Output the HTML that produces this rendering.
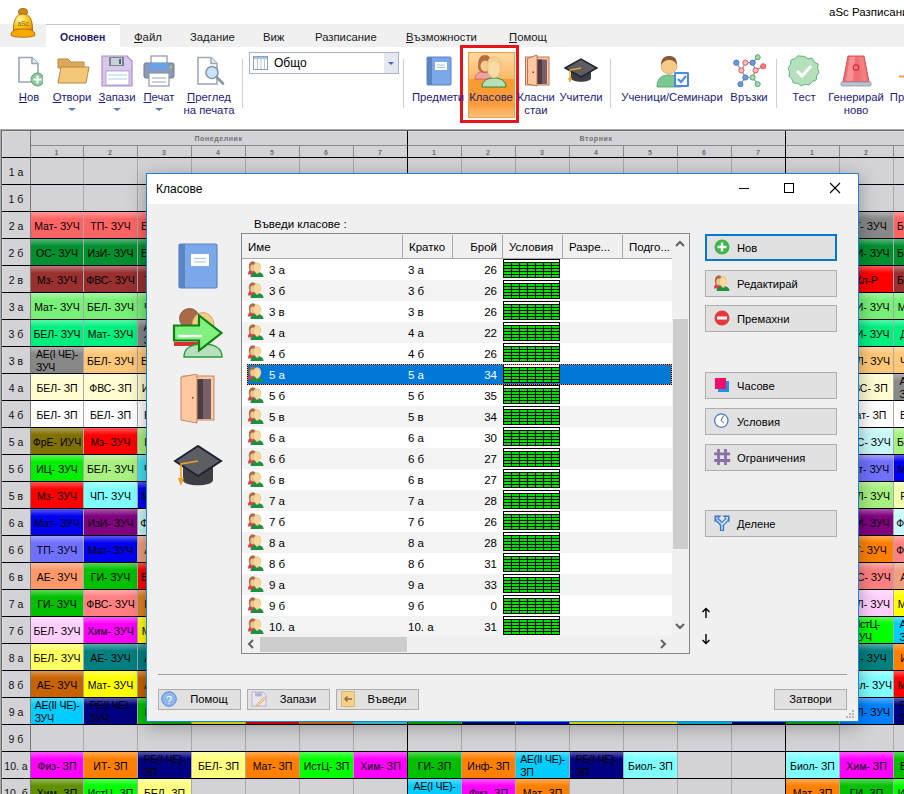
<!DOCTYPE html><html><head><meta charset="utf-8"><style>
*{box-sizing:border-box}
html,body{margin:0;padding:0}
body{width:904px;height:794px;overflow:hidden;position:relative;background:#fff;font-family:"Liberation Sans",sans-serif;}
.a{position:absolute}
.t{position:absolute;white-space:nowrap;}
.cell{position:absolute;overflow:hidden;font-size:10.5px;color:#000;line-height:11px;display:flex;align-items:center;justify-content:center;text-align:center;padding-top:2px}
.c2{align-items:flex-start;text-align:left;padding-top:1px;line-height:13px;letter-spacing:-0.25px}
.rl{position:absolute;font-size:10.5px;color:#101010;display:flex;align-items:center;justify-content:center;padding-top:2px}
.hn{position:absolute;font-size:7px;font-weight:bold;color:#707070;text-align:center;line-height:8px}
.dn{letter-spacing:0.6px}
.rt{position:absolute;font-size:11.3px;color:#1e1a78;white-space:nowrap;text-align:center;line-height:13px}
.tab{position:absolute;top:31px;font-size:11.3px;color:#1a1a1a;white-space:nowrap}
.btnx{position:absolute;background:#e1e1e1;border:1px solid #adadad;font-size:11.5px;color:#000}
.btn .l{position:absolute;white-space:nowrap}
.lr{position:absolute;left:0;width:429px;height:21px;font-size:11.5px;color:#000}
</style></head><body>

<div class="a" style="left:0;top:129px;width:904px;height:665px;background:#d3d2d7"></div>
<div class="a" style="left:0;top:129px;width:904px;height:1px;background:#ababab"></div>
<div class="a" style="left:1px;top:130px;width:903px;height:1px;background:#686868"></div>
<div class="a" style="left:0;top:129px;width:1px;height:665px;background:#ababab"></div>
<div class="a" style="left:1px;top:130px;width:1px;height:664px;background:#686868"></div>
<div class="a" style="left:2px;top:131px;width:902px;height:1px;background:#dedde2"></div>
<div class="a" style="left:2px;top:131px;width:1px;height:663px;background:#dedde2"></div>
<div class="a" style="left:30px;top:145px;width:874px;height:1px;background:#8a8a8a"></div>
<div class="hn dn" style="left:30px;top:135px;width:377px;">Понеделник</div>
<div class="hn dn" style="left:407px;top:135px;width:378px;">Вторник</div>
<div class="hn dn" style="left:785px;top:135px;width:378px;">Сряда</div>
<div class="cell" style="left:31px;top:212px;width:52px;height:26px;background:linear-gradient(#ff9a9a,#ff6464 7px,#ff6464)">Мат-&#8203; ЗУЧ</div>
<div class="cell" style="left:84px;top:212px;width:53px;height:26px;background:linear-gradient(#ff9a9a,#ff6464 7px,#ff6464)">ТП-&#8203; ЗУЧ</div>
<div class="cell" style="left:138px;top:212px;width:53px;height:26px;background:linear-gradient(#ff9a9a,#ff6464 7px,#ff6464)">БЕЛ-&#8203; ЗУЧ</div>
<div class="cell" style="left:31px;top:239px;width:52px;height:26px;background:linear-gradient(#59b678,#009030 7px,#009030)">ОС-&#8203; ЗУЧ</div>
<div class="cell" style="left:84px;top:239px;width:53px;height:26px;background:linear-gradient(#59b678,#009030 7px,#009030)">ИзИ-&#8203; ЗУЧ</div>
<div class="cell" style="left:138px;top:239px;width:53px;height:26px;background:linear-gradient(#59b678,#009030 7px,#009030)">БЕЛ-&#8203; ЗУЧ</div>
<div class="cell" style="left:31px;top:266px;width:52px;height:26px;background:linear-gradient(#bc7878,#983030 7px,#983030)">Мз-&#8203; ЗУЧ</div>
<div class="cell" style="left:84px;top:266px;width:53px;height:26px;background:linear-gradient(#bc7878,#983030 7px,#983030)">ФВС-&#8203; ЗУЧ</div>
<div class="cell" style="left:138px;top:266px;width:53px;height:26px;background:linear-gradient(#bc7878,#983030 7px,#983030)">ТП-&#8203; ЗУЧ</div>
<div class="cell" style="left:31px;top:293px;width:52px;height:26px;background:linear-gradient(#a7f5a7,#78f078 7px,#78f078)">Мат-&#8203; ЗУЧ</div>
<div class="cell" style="left:84px;top:293px;width:53px;height:26px;background:linear-gradient(#a7f5a7,#78f078 7px,#78f078)">БЕЛ-&#8203; ЗУЧ</div>
<div class="cell" style="left:138px;top:293px;width:53px;height:26px;background:linear-gradient(#a7f5a7,#78f078 7px,#78f078)">ЧП-&#8203; ЗУЧ</div>
<div class="cell" style="left:31px;top:320px;width:52px;height:26px;background:linear-gradient(#59f5ac,#00f080 7px,#00f080)">БЕЛ-&#8203; ЗУЧ</div>
<div class="cell" style="left:84px;top:320px;width:53px;height:26px;background:linear-gradient(#59f5ac,#00f080 7px,#00f080)">Мат-&#8203; ЗУЧ</div>
<div class="cell c2" style="left:138px;top:320px;width:53px;height:26px;background:linear-gradient(#b1b1b1,#888888 7px,#888888)"><span>АЕ(I ЧЕ)-<br>ЗУЧ</span></div>
<div class="cell c2" style="left:31px;top:347px;width:52px;height:26px;background:linear-gradient(#b1b1b1,#888888 7px,#888888)"><span>АЕ(I ЧЕ)-<br>ЗУЧ</span></div>
<div class="cell" style="left:84px;top:347px;width:53px;height:26px;background:linear-gradient(#ffdba7,#ffc878 7px,#ffc878)">БЕЛ-&#8203; ЗУЧ</div>
<div class="cell" style="left:138px;top:347px;width:53px;height:26px;background:linear-gradient(#ffdba7,#ffc878 7px,#ffc878)">БЕЛ-&#8203; ЗУЧ</div>
<div class="cell" style="left:31px;top:374px;width:52px;height:26px;background:linear-gradient(#fffde0,#fffcd0 7px,#fffcd0)">БЕЛ-&#8203; ЗП</div>
<div class="cell" style="left:84px;top:374px;width:53px;height:26px;background:linear-gradient(#fffde0,#fffcd0 7px,#fffcd0)">ФВС-&#8203; ЗП</div>
<div class="cell" style="left:138px;top:374px;width:53px;height:26px;background:linear-gradient(#fffde0,#fffcd0 7px,#fffcd0)">ИстЦ-&#8203; ЗП</div>
<div class="cell" style="left:31px;top:401px;width:52px;height:26px;background:linear-gradient(#ffffff,#ffffff 7px,#ffffff)">БЕЛ-&#8203; ЗП</div>
<div class="cell" style="left:84px;top:401px;width:53px;height:26px;background:linear-gradient(#ffffff,#ffffff 7px,#ffffff)">БЕЛ-&#8203; ЗП</div>
<div class="cell" style="left:138px;top:401px;width:53px;height:26px;background:linear-gradient(#ffffff,#ffffff 7px,#ffffff)">БЕЛ-&#8203; ЗП</div>
<div class="cell" style="left:31px;top:428px;width:52px;height:26px;background:linear-gradient(#aca259,#807000 7px,#807000)">ФрЕ-&#8203; ИУЧ</div>
<div class="cell" style="left:84px;top:428px;width:53px;height:26px;background:linear-gradient(#ff5959,#ff0000 7px,#ff0000)">Мз-&#8203; ЗУЧ</div>
<div class="cell" style="left:138px;top:428px;width:53px;height:26px;background:linear-gradient(#c6f5ac,#a8f080 7px,#a8f080)">ВЕ-&#8203; ЗУЧ</div>
<div class="cell" style="left:31px;top:455px;width:52px;height:26px;background:linear-gradient(#59f559,#00f000 7px,#00f000)">ИЦ-&#8203; ЗУЧ</div>
<div class="cell" style="left:84px;top:455px;width:53px;height:26px;background:linear-gradient(#c6f5ac,#a8f080 7px,#a8f080)">БЕЛ-&#8203; ЗУЧ</div>
<div class="cell" style="left:138px;top:455px;width:53px;height:26px;background:linear-gradient(#82eaf5,#40e0f0 7px,#40e0f0)">ЧП-&#8203; ЗУЧ</div>
<div class="cell" style="left:31px;top:482px;width:52px;height:26px;background:linear-gradient(#ff5959,#ff0000 7px,#ff0000)">Мз-&#8203; ЗУЧ</div>
<div class="cell" style="left:84px;top:482px;width:53px;height:26px;background:linear-gradient(#acffff,#80ffff 7px,#80ffff)">ЧП-&#8203; ЗУЧ</div>
<div class="cell" style="left:138px;top:482px;width:53px;height:26px;background:linear-gradient(#5959f5,#0000f0 7px,#0000f0)">Мат-&#8203; ЗУЧ</div>
<div class="cell" style="left:31px;top:509px;width:52px;height:26px;background:linear-gradient(#5959f5,#0000f0 7px,#0000f0)">Мат-&#8203; ЗУЧ</div>
<div class="cell" style="left:84px;top:509px;width:53px;height:26px;background:linear-gradient(#ac59ac,#800080 7px,#800080)">ИзИ-&#8203; ЗУЧ</div>
<div class="cell" style="left:138px;top:509px;width:53px;height:26px;background:linear-gradient(#dbfafa,#c8f8f8 7px,#c8f8f8)">ФВС-&#8203; ЗУЧ</div>
<div class="cell" style="left:31px;top:536px;width:52px;height:26px;background:linear-gradient(#a2a2ff,#7070ff 7px,#7070ff)">ТП-&#8203; ЗУЧ</div>
<div class="cell" style="left:84px;top:536px;width:53px;height:26px;background:linear-gradient(#5959f5,#0000f0 7px,#0000f0)">Мат-&#8203; ЗУЧ</div>
<div class="cell" style="left:138px;top:536px;width:53px;height:26px;background:linear-gradient(#f5c1ac,#f0a080 7px,#f0a080)">АЕ-&#8203; ЗУЧ</div>
<div class="cell" style="left:31px;top:563px;width:52px;height:26px;background:linear-gradient(#ffbc9c,#ff9868 7px,#ff9868)">АЕ-&#8203; ЗУЧ</div>
<div class="cell" style="left:84px;top:563px;width:53px;height:26px;background:linear-gradient(#59d659,#00c000 7px,#00c000)">ГИ-&#8203; ЗУЧ</div>
<div class="cell" style="left:138px;top:563px;width:53px;height:26px;background:linear-gradient(#ff5959,#ff0000 7px,#ff0000)">БЕЛ-&#8203; ЗУЧ</div>
<div class="cell" style="left:31px;top:590px;width:52px;height:26px;background:linear-gradient(#59d659,#00c000 7px,#00c000)">ГИ-&#8203; ЗУЧ</div>
<div class="cell" style="left:84px;top:590px;width:53px;height:26px;background:linear-gradient(#ffacac,#ff8080 7px,#ff8080)">ФВС-&#8203; ЗУЧ</div>
<div class="cell" style="left:138px;top:590px;width:53px;height:26px;background:linear-gradient(#eaac6e,#e08020 7px,#e08020)">ИТ-&#8203; ЗУЧ</div>
<div class="cell" style="left:31px;top:617px;width:52px;height:26px;background:linear-gradient(#ffe0ff,#ffd0ff 7px,#ffd0ff)">БЕЛ-&#8203; ЗУЧ</div>
<div class="cell" style="left:84px;top:617px;width:53px;height:26px;background:linear-gradient(#ff59ff,#ff00ff 7px,#ff00ff)">Хим-&#8203; ЗУЧ</div>
<div class="cell" style="left:138px;top:617px;width:53px;height:26px;background:linear-gradient(#ffff59,#ffff00 7px,#ffff00)">Мат-&#8203; ЗУЧ</div>
<div class="cell" style="left:31px;top:644px;width:52px;height:26px;background:linear-gradient(#ffff97,#ffff60 7px,#ffff60)">БЕЛ-&#8203; ЗУЧ</div>
<div class="cell" style="left:84px;top:644px;width:53px;height:26px;background:linear-gradient(#59acac,#008080 7px,#008080)">АЕ-&#8203; ЗУЧ</div>
<div class="cell" style="left:138px;top:644px;width:53px;height:26px;background:linear-gradient(#59acac,#008080 7px,#008080)">АЕ-&#8203; ЗУЧ</div>
<div class="cell" style="left:31px;top:671px;width:52px;height:26px;background:linear-gradient(#db9a59,#c86400 7px,#c86400)">АЕ-&#8203; ЗУЧ</div>
<div class="cell" style="left:84px;top:671px;width:53px;height:26px;background:linear-gradient(#ffff59,#ffff00 7px,#ffff00)">Мат-&#8203; ЗУЧ</div>
<div class="cell" style="left:138px;top:671px;width:53px;height:26px;background:linear-gradient(#db9a59,#c86400 7px,#c86400)">АЕ-&#8203; ЗУЧ</div>
<div class="cell c2" style="left:31px;top:698px;width:52px;height:26px;background:linear-gradient(#59ddff,#00ccff 7px,#00ccff)"><span>АЕ(II ЧЕ)-<br>ЗУЧ</span></div>
<div class="cell c2" style="left:84px;top:698px;width:53px;height:26px;background:linear-gradient(#5959ac,#000080 7px,#000080)"><span>РЕ(I ЧЕ)-<br>ЗУЧ</span></div>
<div class="cell" style="left:138px;top:698px;width:53px;height:26px;background:linear-gradient(#59d659,#00c000 7px,#00c000)">ГИ-&#8203; ЗУЧ</div>
<div class="cell" style="left:192px;top:698px;width:53px;height:26px;background:linear-gradient(#ffff59,#ffff00 7px,#ffff00)"></div>
<div class="cell" style="left:246px;top:698px;width:53px;height:26px;background:linear-gradient(#ff5959,#ff0000 7px,#ff0000)"></div>
<div class="cell" style="left:300px;top:698px;width:53px;height:26px;background:linear-gradient(#eaac6e,#e08020 7px,#e08020)"></div>
<div class="cell" style="left:354px;top:698px;width:53px;height:26px;background:linear-gradient(#82eaf5,#40e0f0 7px,#40e0f0)"></div>
<div class="cell" style="left:408px;top:698px;width:53px;height:26px;background:linear-gradient(#59d659,#00c000 7px,#00c000)"></div>
<div class="cell" style="left:462px;top:698px;width:53px;height:26px;background:linear-gradient(#5959ac,#000080 7px,#000080)"></div>
<div class="cell" style="left:516px;top:698px;width:53px;height:26px;background:linear-gradient(#5959f5,#0000f0 7px,#0000f0)"></div>
<div class="cell" style="left:570px;top:698px;width:53px;height:26px;background:linear-gradient(#ffff59,#ffff00 7px,#ffff00)"></div>
<div class="cell" style="left:624px;top:698px;width:53px;height:26px;background:linear-gradient(#ffff59,#ffff00 7px,#ffff00)"></div>
<div class="cell" style="left:678px;top:698px;width:53px;height:26px;background:linear-gradient(#59ddff,#00ccff 7px,#00ccff)"></div>
<div class="cell" style="left:732px;top:698px;width:53px;height:26px;background:linear-gradient(#5959ac,#000080 7px,#000080)"></div>
<div class="cell" style="left:786px;top:698px;width:53px;height:26px;background:linear-gradient(#59d659,#00c000 7px,#00c000)"></div>
<div class="cell" style="left:840px;top:698px;width:53px;height:26px;background:linear-gradient(#59acff,#0080ff 7px,#0080ff)">БЕЛ-&#8203; ЗУЧ</div>
<div class="cell c2" style="left:894px;top:698px;width:53px;height:26px;background:linear-gradient(#5959ac,#000080 7px,#000080)"><span>РЕ(I ЧЕ)-<br>ЗУЧ</span></div>
<div class="cell" style="left:840px;top:212px;width:53px;height:26px;background:linear-gradient(#b1b1b1,#888888 7px,#888888)">ИТ-&#8203; ЗУЧ</div>
<div class="cell" style="left:894px;top:212px;width:53px;height:26px;background:linear-gradient(#ff9a9a,#ff6464 7px,#ff6464)">БЕЛ-&#8203; ЗУЧ</div>
<div class="cell" style="left:840px;top:239px;width:53px;height:26px;background:linear-gradient(#59b678,#009030 7px,#009030)">ИзИ-&#8203; ЗУЧ</div>
<div class="cell" style="left:894px;top:239px;width:53px;height:26px;background:linear-gradient(#59b678,#009030 7px,#009030)">БЕЛ-&#8203; ЗУЧ</div>
<div class="cell" style="left:840px;top:266px;width:53px;height:26px;background:linear-gradient(#ff5959,#ff0000 7px,#ff0000)">Кл-Р</div>
<div class="cell" style="left:894px;top:266px;width:53px;height:26px;background:linear-gradient(#bc7878,#983030 7px,#983030)">БЕЛ-&#8203; ЗУЧ</div>
<div class="cell" style="left:840px;top:293px;width:53px;height:26px;background:linear-gradient(#a7f5a7,#78f078 7px,#78f078)">ИзИ-&#8203; ЗУЧ</div>
<div class="cell" style="left:894px;top:293px;width:53px;height:26px;background:linear-gradient(#a7f5a7,#78f078 7px,#78f078)">Мат-&#8203; ЗУЧ</div>
<div class="cell" style="left:840px;top:320px;width:53px;height:26px;background:linear-gradient(#59f5ac,#00f080 7px,#00f080)">ИзИ-&#8203; ЗУЧ</div>
<div class="cell" style="left:894px;top:320px;width:53px;height:26px;background:linear-gradient(#59f5ac,#00f080 7px,#00f080)">ДХ-&#8203; ЗУЧ</div>
<div class="cell" style="left:840px;top:347px;width:53px;height:26px;background:linear-gradient(#ffdba7,#ffc878 7px,#ffc878)">БЕЛ-&#8203; ЗУЧ</div>
<div class="cell" style="left:894px;top:347px;width:53px;height:26px;background:linear-gradient(#ffdba7,#ffc878 7px,#ffc878)">ЧП-&#8203; ЗУЧ</div>
<div class="cell" style="left:840px;top:374px;width:53px;height:26px;background:linear-gradient(#fffde0,#fffcd0 7px,#fffcd0)">ФВС-&#8203; ЗП</div>
<div class="cell c2" style="left:894px;top:374px;width:53px;height:26px;background:linear-gradient(#b1b1b1,#888888 7px,#888888)"><span>АЕ(I ЧЕ)-<br>ЗП</span></div>
<div class="cell" style="left:840px;top:401px;width:53px;height:26px;background:linear-gradient(#ffffff,#ffffff 7px,#ffffff)">Мат-&#8203; ЗП</div>
<div class="cell" style="left:894px;top:401px;width:53px;height:26px;background:linear-gradient(#ffffff,#ffffff 7px,#ffffff)">БЕЛ-&#8203; ЗП</div>
<div class="cell" style="left:840px;top:428px;width:53px;height:26px;background:linear-gradient(#dbfafa,#c8f8f8 7px,#c8f8f8)">ФВС-&#8203; ЗУЧ</div>
<div class="cell" style="left:894px;top:428px;width:53px;height:26px;background:linear-gradient(#c6f5ac,#a8f080 7px,#a8f080)">БЕЛ-&#8203; ЗУЧ</div>
<div class="cell" style="left:840px;top:455px;width:53px;height:26px;background:linear-gradient(#a2a2ff,#7070ff 7px,#7070ff)">Мат-&#8203; ЗУЧ</div>
<div class="cell" style="left:894px;top:455px;width:53px;height:26px;background:linear-gradient(#5959f5,#0000f0 7px,#0000f0)">Мат-&#8203; ЗУЧ</div>
<div class="cell" style="left:840px;top:482px;width:53px;height:26px;background:linear-gradient(#c6f5ac,#a8f080 7px,#a8f080)">БЕЛ-&#8203; ЗУЧ</div>
<div class="cell" style="left:894px;top:482px;width:53px;height:26px;background:linear-gradient(#f5ffcb,#f0ffb0 7px,#f0ffb0)">РЕ-&#8203; ЗУЧ</div>
<div class="cell" style="left:840px;top:509px;width:53px;height:26px;background:linear-gradient(#ac59ac,#800080 7px,#800080)">ИзИ-&#8203; ЗУЧ</div>
<div class="cell" style="left:894px;top:509px;width:53px;height:26px;background:linear-gradient(#dbfafa,#c8f8f8 7px,#c8f8f8)">ФВС-&#8203; ЗУЧ</div>
<div class="cell" style="left:840px;top:536px;width:53px;height:26px;background:linear-gradient(#ffac59,#ff8000 7px,#ff8000)">ИТ-&#8203; ЗУЧ</div>
<div class="cell" style="left:894px;top:536px;width:53px;height:26px;background:linear-gradient(#ffacac,#ff8080 7px,#ff8080)">ФВС-&#8203; ЗУЧ</div>
<div class="cell" style="left:840px;top:563px;width:53px;height:26px;background:linear-gradient(#ffacac,#ff8080 7px,#ff8080)">ФВС-&#8203; ЗУЧ</div>
<div class="cell" style="left:894px;top:563px;width:53px;height:26px;background:linear-gradient(#f5c1ac,#f0a080 7px,#f0a080)">АЕ-&#8203; ЗУЧ</div>
<div class="cell" style="left:840px;top:590px;width:53px;height:26px;background:linear-gradient(#ffe0ff,#ffd0ff 7px,#ffd0ff)">БЕЛ-&#8203; ЗУЧ</div>
<div class="cell" style="left:894px;top:590px;width:53px;height:26px;background:linear-gradient(#ffff59,#ffff00 7px,#ffff00)">Мат-&#8203; ЗУЧ</div>
<div class="cell c2" style="left:840px;top:617px;width:53px;height:26px;background:linear-gradient(#59ff59,#00ff00 7px,#00ff00)"><span>ИстЦ-<br>ЗУЧ</span></div>
<div class="cell c2" style="left:894px;top:617px;width:53px;height:26px;background:linear-gradient(#59ddff,#00ccff 7px,#00ccff)"><span>АЕ(I ЧЕ)-<br>ЗУЧ</span></div>
<div class="cell" style="left:840px;top:644px;width:53px;height:26px;background:linear-gradient(#59acac,#008080 7px,#008080)">АЕ-&#8203; ЗУЧ</div>
<div class="cell" style="left:894px;top:644px;width:53px;height:26px;background:linear-gradient(#ffac59,#ff8000 7px,#ff8000)">ИТ-&#8203; ЗУЧ</div>
<div class="cell" style="left:840px;top:671px;width:53px;height:26px;background:linear-gradient(#acffff,#80ffff 7px,#80ffff)">Биол-&#8203; ЗУЧ</div>
<div class="cell" style="left:894px;top:671px;width:53px;height:26px;background:linear-gradient(#ff5959,#ff0000 7px,#ff0000)">Мат-&#8203; ЗУЧ</div>
<div class="cell" style="left:31px;top:752px;width:52px;height:26px;background:linear-gradient(#ff59ff,#ff00ff 7px,#ff00ff)">Физ-&#8203; ЗП</div>
<div class="cell" style="left:84px;top:752px;width:53px;height:26px;background:linear-gradient(#ffac59,#ff8000 7px,#ff8000)">ИТ-&#8203; ЗП</div>
<div class="cell c2" style="left:138px;top:752px;width:53px;height:26px;background:linear-gradient(#5959ac,#000080 7px,#000080)"><span>РЕ(I ЧЕ)-<br>ЗП</span></div>
<div class="cell" style="left:192px;top:752px;width:53px;height:26px;background:linear-gradient(#ffffac,#ffff80 7px,#ffff80)">БЕЛ-&#8203; ЗП</div>
<div class="cell" style="left:246px;top:752px;width:53px;height:26px;background:linear-gradient(#ffac59,#ff8000 7px,#ff8000)">Мат-&#8203; ЗП</div>
<div class="cell" style="left:300px;top:752px;width:53px;height:26px;background:linear-gradient(#59ff59,#00ff00 7px,#00ff00)">ИстЦ-&#8203; ЗП</div>
<div class="cell" style="left:354px;top:752px;width:53px;height:26px;background:linear-gradient(#ff59ff,#ff00ff 7px,#ff00ff)">Хим-&#8203; ЗП</div>
<div class="cell" style="left:408px;top:752px;width:53px;height:26px;background:linear-gradient(#59d659,#00c000 7px,#00c000)">ГИ-&#8203; ЗП</div>
<div class="cell" style="left:462px;top:752px;width:53px;height:26px;background:linear-gradient(#ffac59,#ff8000 7px,#ff8000)">Инф-&#8203; ЗП</div>
<div class="cell c2" style="left:516px;top:752px;width:53px;height:26px;background:linear-gradient(#59ddff,#00ccff 7px,#00ccff)"><span>АЕ(II ЧЕ)-<br>ЗП</span></div>
<div class="cell c2" style="left:570px;top:752px;width:53px;height:26px;background:linear-gradient(#5959ac,#000080 7px,#000080)"><span>РЕ(I ЧЕ)-<br>ЗП</span></div>
<div class="cell" style="left:624px;top:752px;width:53px;height:26px;background:linear-gradient(#acffff,#80ffff 7px,#80ffff)">Биол-&#8203; ЗП</div>
<div class="cell" style="left:786px;top:752px;width:53px;height:26px;background:linear-gradient(#acffff,#80ffff 7px,#80ffff)">Биол-&#8203; ЗП</div>
<div class="cell" style="left:840px;top:752px;width:53px;height:26px;background:linear-gradient(#ff59ff,#ff00ff 7px,#ff00ff)">Хим-&#8203; ЗП</div>
<div class="cell" style="left:894px;top:752px;width:53px;height:26px;background:linear-gradient(#59d659,#00c000 7px,#00c000)">БЕЛ-&#8203; ЗП</div>
<div class="cell" style="left:31px;top:779px;width:52px;height:26px;background:linear-gradient(#97b659,#609000 7px,#609000)">Хим-&#8203; ЗП</div>
<div class="cell" style="left:84px;top:779px;width:53px;height:26px;background:linear-gradient(#59ff59,#00ff00 7px,#00ff00)">ИстЦ-&#8203; ЗП</div>
<div class="cell" style="left:138px;top:779px;width:53px;height:26px;background:linear-gradient(#ffffac,#ffff80 7px,#ffff80)">БЕЛ-&#8203; ЗП</div>
<div class="cell c2" style="left:408px;top:779px;width:53px;height:26px;background:linear-gradient(#59ddff,#00ccff 7px,#00ccff)"><span>АЕ(I ЧЕ)-<br>ЗП</span></div>
<div class="cell" style="left:462px;top:779px;width:53px;height:26px;background:linear-gradient(#ff59ff,#ff00ff 7px,#ff00ff)">Физ-&#8203; ЗП</div>
<div class="cell" style="left:516px;top:779px;width:53px;height:26px;background:linear-gradient(#ffac59,#ff8000 7px,#ff8000)">Мат-&#8203; ЗП</div>
<div class="cell" style="left:786px;top:779px;width:53px;height:26px;background:linear-gradient(#ffac59,#ff8000 7px,#ff8000)">Мат-&#8203; ЗП</div>
<div class="cell" style="left:840px;top:779px;width:53px;height:26px;background:linear-gradient(#59d659,#00c000 7px,#00c000)">ГИ-&#8203; ЗП</div>
<div class="cell" style="left:894px;top:779px;width:53px;height:26px;background:linear-gradient(#59ff59,#00ff00 7px,#00ff00)">ИстЦ-&#8203; ЗП</div>
<div class="a" style="left:30px;top:131px;width:1px;height:663px;background:#000"></div>
<div class="hn" style="left:30px;top:149px;width:53px;">1</div>
<div class="a" style="left:83px;top:146px;width:1px;height:11px;background:#8a8a8a"></div>
<div class="a" style="left:83px;top:158px;width:1px;height:636px;background:#a9a9ab"></div>
<div class="hn" style="left:83px;top:149px;width:54px;">2</div>
<div class="a" style="left:137px;top:146px;width:1px;height:11px;background:#8a8a8a"></div>
<div class="a" style="left:137px;top:158px;width:1px;height:636px;background:#a9a9ab"></div>
<div class="hn" style="left:137px;top:149px;width:54px;">3</div>
<div class="a" style="left:191px;top:146px;width:1px;height:11px;background:#8a8a8a"></div>
<div class="a" style="left:191px;top:158px;width:1px;height:636px;background:#a9a9ab"></div>
<div class="hn" style="left:191px;top:149px;width:54px;">4</div>
<div class="a" style="left:245px;top:146px;width:1px;height:11px;background:#8a8a8a"></div>
<div class="a" style="left:245px;top:158px;width:1px;height:636px;background:#a9a9ab"></div>
<div class="hn" style="left:245px;top:149px;width:54px;">5</div>
<div class="a" style="left:299px;top:146px;width:1px;height:11px;background:#8a8a8a"></div>
<div class="a" style="left:299px;top:158px;width:1px;height:636px;background:#a9a9ab"></div>
<div class="hn" style="left:299px;top:149px;width:54px;">6</div>
<div class="a" style="left:353px;top:146px;width:1px;height:11px;background:#8a8a8a"></div>
<div class="a" style="left:353px;top:158px;width:1px;height:636px;background:#a9a9ab"></div>
<div class="hn" style="left:353px;top:149px;width:54px;">7</div>
<div class="a" style="left:407px;top:131px;width:1px;height:663px;background:#000"></div>
<div class="hn" style="left:407px;top:149px;width:54px;">1</div>
<div class="a" style="left:461px;top:146px;width:1px;height:11px;background:#8a8a8a"></div>
<div class="a" style="left:461px;top:158px;width:1px;height:636px;background:#a9a9ab"></div>
<div class="hn" style="left:461px;top:149px;width:54px;">2</div>
<div class="a" style="left:515px;top:146px;width:1px;height:11px;background:#8a8a8a"></div>
<div class="a" style="left:515px;top:158px;width:1px;height:636px;background:#a9a9ab"></div>
<div class="hn" style="left:515px;top:149px;width:54px;">3</div>
<div class="a" style="left:569px;top:146px;width:1px;height:11px;background:#8a8a8a"></div>
<div class="a" style="left:569px;top:158px;width:1px;height:636px;background:#a9a9ab"></div>
<div class="hn" style="left:569px;top:149px;width:54px;">4</div>
<div class="a" style="left:623px;top:146px;width:1px;height:11px;background:#8a8a8a"></div>
<div class="a" style="left:623px;top:158px;width:1px;height:636px;background:#a9a9ab"></div>
<div class="hn" style="left:623px;top:149px;width:54px;">5</div>
<div class="a" style="left:677px;top:146px;width:1px;height:11px;background:#8a8a8a"></div>
<div class="a" style="left:677px;top:158px;width:1px;height:636px;background:#a9a9ab"></div>
<div class="hn" style="left:677px;top:149px;width:54px;">6</div>
<div class="a" style="left:731px;top:146px;width:1px;height:11px;background:#8a8a8a"></div>
<div class="a" style="left:731px;top:158px;width:1px;height:636px;background:#a9a9ab"></div>
<div class="hn" style="left:731px;top:149px;width:54px;">7</div>
<div class="a" style="left:785px;top:131px;width:1px;height:663px;background:#000"></div>
<div class="hn" style="left:785px;top:149px;width:54px;">1</div>
<div class="a" style="left:839px;top:146px;width:1px;height:11px;background:#8a8a8a"></div>
<div class="a" style="left:839px;top:158px;width:1px;height:636px;background:#a9a9ab"></div>
<div class="hn" style="left:839px;top:149px;width:54px;">2</div>
<div class="a" style="left:893px;top:146px;width:1px;height:11px;background:#8a8a8a"></div>
<div class="a" style="left:893px;top:158px;width:1px;height:636px;background:#a9a9ab"></div>
<div class="hn" style="left:893px;top:149px;width:54px;">3</div>
<div class="a" style="left:947px;top:146px;width:1px;height:11px;background:#8a8a8a"></div>
<div class="a" style="left:947px;top:158px;width:1px;height:636px;background:#a9a9ab"></div>
<div class="hn" style="left:947px;top:149px;width:54px;">4</div>
<div class="a" style="left:1001px;top:146px;width:1px;height:11px;background:#8a8a8a"></div>
<div class="a" style="left:1001px;top:158px;width:1px;height:636px;background:#a9a9ab"></div>
<div class="hn" style="left:1001px;top:149px;width:54px;">5</div>
<div class="a" style="left:1055px;top:146px;width:1px;height:11px;background:#8a8a8a"></div>
<div class="a" style="left:1055px;top:158px;width:1px;height:636px;background:#a9a9ab"></div>
<div class="hn" style="left:1055px;top:149px;width:54px;">6</div>
<div class="a" style="left:1109px;top:146px;width:1px;height:11px;background:#8a8a8a"></div>
<div class="a" style="left:1109px;top:158px;width:1px;height:636px;background:#a9a9ab"></div>
<div class="hn" style="left:1109px;top:149px;width:54px;">7</div>
<div class="a" style="left:1163px;top:131px;width:1px;height:663px;background:#000"></div>
<div class="a" style="left:30px;top:131px;width:1px;height:663px;background:#7a7a7a"></div>
<div class="a" style="left:2px;top:157px;width:902px;height:1px;background:#000"></div>
<div class="a" style="left:2px;top:184px;width:902px;height:1px;background:#000"></div>
<div class="a" style="left:2px;top:211px;width:902px;height:1px;background:#000"></div>
<div class="a" style="left:2px;top:238px;width:902px;height:1px;background:#000"></div>
<div class="a" style="left:2px;top:265px;width:902px;height:1px;background:#000"></div>
<div class="a" style="left:2px;top:292px;width:902px;height:1px;background:#000"></div>
<div class="a" style="left:2px;top:319px;width:902px;height:1px;background:#000"></div>
<div class="a" style="left:2px;top:346px;width:902px;height:1px;background:#000"></div>
<div class="a" style="left:2px;top:373px;width:902px;height:1px;background:#000"></div>
<div class="a" style="left:2px;top:400px;width:902px;height:1px;background:#000"></div>
<div class="a" style="left:2px;top:427px;width:902px;height:1px;background:#000"></div>
<div class="a" style="left:2px;top:454px;width:902px;height:1px;background:#000"></div>
<div class="a" style="left:2px;top:481px;width:902px;height:1px;background:#000"></div>
<div class="a" style="left:2px;top:508px;width:902px;height:1px;background:#000"></div>
<div class="a" style="left:2px;top:535px;width:902px;height:1px;background:#000"></div>
<div class="a" style="left:2px;top:562px;width:902px;height:1px;background:#000"></div>
<div class="a" style="left:2px;top:589px;width:902px;height:1px;background:#000"></div>
<div class="a" style="left:2px;top:616px;width:902px;height:1px;background:#000"></div>
<div class="a" style="left:2px;top:643px;width:902px;height:1px;background:#000"></div>
<div class="a" style="left:2px;top:670px;width:902px;height:1px;background:#000"></div>
<div class="a" style="left:2px;top:697px;width:902px;height:1px;background:#000"></div>
<div class="a" style="left:2px;top:724px;width:902px;height:1px;background:#000"></div>
<div class="a" style="left:2px;top:751px;width:902px;height:1px;background:#000"></div>
<div class="a" style="left:2px;top:778px;width:902px;height:1px;background:#000"></div>
<div class="rl" style="left:2px;top:158px;width:28px;height:26px">1 а</div>
<div class="rl" style="left:2px;top:185px;width:28px;height:26px">1 б</div>
<div class="rl" style="left:2px;top:212px;width:28px;height:26px">2 а</div>
<div class="rl" style="left:2px;top:239px;width:28px;height:26px">2 б</div>
<div class="rl" style="left:2px;top:266px;width:28px;height:26px">2 в</div>
<div class="rl" style="left:2px;top:293px;width:28px;height:26px">3 а</div>
<div class="rl" style="left:2px;top:320px;width:28px;height:26px">3 б</div>
<div class="rl" style="left:2px;top:347px;width:28px;height:26px">3 в</div>
<div class="rl" style="left:2px;top:374px;width:28px;height:26px">4 а</div>
<div class="rl" style="left:2px;top:401px;width:28px;height:26px">4 б</div>
<div class="rl" style="left:2px;top:428px;width:28px;height:26px">5 а</div>
<div class="rl" style="left:2px;top:455px;width:28px;height:26px">5 б</div>
<div class="rl" style="left:2px;top:482px;width:28px;height:26px">5 в</div>
<div class="rl" style="left:2px;top:509px;width:28px;height:26px">6 а</div>
<div class="rl" style="left:2px;top:536px;width:28px;height:26px">6 б</div>
<div class="rl" style="left:2px;top:563px;width:28px;height:26px">6 в</div>
<div class="rl" style="left:2px;top:590px;width:28px;height:26px">7 а</div>
<div class="rl" style="left:2px;top:617px;width:28px;height:26px">7 б</div>
<div class="rl" style="left:2px;top:644px;width:28px;height:26px">8 а</div>
<div class="rl" style="left:2px;top:671px;width:28px;height:26px">8 б</div>
<div class="rl" style="left:2px;top:698px;width:28px;height:26px">9 а</div>
<div class="rl" style="left:2px;top:725px;width:28px;height:26px">9 б</div>
<div class="rl" style="left:2px;top:752px;width:28px;height:26px">10. а</div>
<div class="rl" style="left:2px;top:779px;width:28px;height:26px">10. б</div>
<div class="a" style="left:0;top:24px;width:904px;height:23px;background:#f0f0f0"></div>
<div class="a" style="left:46px;top:24px;width:74px;height:23px;background:#fff;border-top:1px solid #c6c6c6"></div>
<div class="t" style="left:829px;top:6px;font-size:11.5px;color:#000">aSc Разписани</div>
<svg class="a" style="left:8px;top:7px" width="30" height="32" viewBox="0 0 30 32">
<defs><radialGradient id="bg1" cx="0.35" cy="0.3" r="0.8"><stop offset="0" stop-color="#fff8b0"/><stop offset="0.45" stop-color="#f8d020"/><stop offset="1" stop-color="#e88a00"/></radialGradient></defs>
<ellipse cx="15" cy="5" rx="4.5" ry="3.5" fill="#d08810" stroke="#8a5a10" stroke-width="0.8"/>
<path d="M5.5 25 C5 13 8 7 15 7 C22 7 25 13 24.5 25 Z" fill="url(#bg1)" stroke="#9a6010" stroke-width="0.8"/>
<path d="M3 28 C3 23 8 22 15 22 C22 22 27 23 27 28 C27 31 3 31 3 28Z" fill="#f8a800" stroke="#9a6010" stroke-width="0.8"/>
<text x="15" y="19" font-size="6.5" text-anchor="middle" fill="#8a5a10" font-family="Liberation Sans">aSc</text>
</svg>
<div class="tab" style="left:60px;top:31px;color:#1c1c64;font-weight:bold;font-size:10.5px">Основен</div>
<div class="tab" style="left:134px"><u>Ф</u>айл</div>
<div class="tab" style="left:190px">Задание</div>
<div class="tab" style="left:263px">Виж</div>
<div class="tab" style="left:315px">Разписание</div>
<div class="tab" style="left:406px"><u>В</u>ъзможности</div>
<div class="tab" style="left:509px"><u>П</u>омощ</div>
<div class="a" style="left:242px;top:59px;width:1px;height:49px;background:#d0d0d0"></div>
<div class="a" style="left:403px;top:59px;width:1px;height:49px;background:#d0d0d0"></div>
<div class="a" style="left:610px;top:59px;width:1px;height:49px;background:#d0d0d0"></div>
<div class="a" style="left:776px;top:59px;width:1px;height:49px;background:#d0d0d0"></div>
<div class="a" style="left:460px;top:45px;width:59px;height:78px;border:3px solid #e8141c"></div>
<div class="a" style="left:468px;top:52px;width:47px;height:66px;border:1px solid #e8a040;background:linear-gradient(#ffd9a0,#fcb868 40%,#f99a30 41%,#fb9c38 80%,#ffc080)"></div>
<div class="rt" style="left:-31px;top:91px;width:120px"><u>Н</u>ов</div>
<div class="rt" style="left:12px;top:91px;width:120px"><u>О</u>твори</div>
<div class="rt" style="left:57px;top:91px;width:120px"><u>З</u>апази</div>
<div class="rt" style="left:99px;top:91px;width:120px"><u>П</u>ечат</div>
<div class="rt" style="left:149px;top:91px;width:120px"><u>П</u>реглед<br>на печата</div>
<div class="rt" style="left:378px;top:91px;width:120px">Предмети</div>
<div class="rt" style="left:431px;top:91px;width:120px">Класове</div>
<div class="rt" style="left:476px;top:91px;width:120px">Класни<br>стаи</div>
<div class="rt" style="left:521px;top:91px;width:120px">Учители</div>
<div class="rt" style="left:612px;top:91px;width:120px">Ученици/Семинари</div>
<div class="rt" style="left:689px;top:91px;width:120px">Връзки</div>
<div class="rt" style="left:744px;top:91px;width:120px">Тест</div>
<div class="rt" style="left:796px;top:91px;width:120px">Генерирай<br>ново</div>
<div class="rt" style="left:837px;top:91px;width:120px">Пр</div>
<div class="a" style="left:68px;top:108px;width:0;height:0;border-left:4px solid transparent;border-right:4px solid transparent;border-top:3px solid #5a7ab0"></div>
<div class="a" style="left:113px;top:108px;width:0;height:0;border-left:4px solid transparent;border-right:4px solid transparent;border-top:3px solid #5a7ab0"></div>
<div class="a" style="left:155px;top:108px;width:0;height:0;border-left:4px solid transparent;border-right:4px solid transparent;border-top:3px solid #5a7ab0"></div>
<div class="a" style="left:249px;top:52px;width:150px;height:22px;border:1px solid #aab4c8;background:#fff"></div>
<div class="a" style="left:384px;top:53px;width:14px;height:20px;background:#e4e8f0"></div>
<div class="a" style="left:388px;top:62px;width:0;height:0;border-left:3px solid transparent;border-right:3px solid transparent;border-top:3px solid #4a6aa0"></div>
<svg class="a" style="left:253px;top:56px" width="15" height="14"><rect x="0.5" y="0.5" width="14" height="13" fill="#fff" stroke="#8ca0c0"/><rect x="1" y="1" width="13" height="2" fill="#a8c0e0"/><path d="M4.5 1V13M8 1V13M11.5 1V13" stroke="#b8c8dc"/></svg>
<div class="t" style="left:274px;top:56px;font-size:12px;color:#000">Общо</div>
<svg class="a" style="left:17px;top:56px" width="26" height="31" viewBox="0 0 26 31"><path d="M2 1.5H15L21 7.5V26H2Z" fill="#fff" stroke="#9aa6b4" stroke-width="1.6"/><path d="M15 1.5V7.5H21" fill="#e8ecf0" stroke="#9aa6b4" stroke-width="1.6"/><circle cx="20.5" cy="23.5" r="6.5" fill="#8cc8a0" stroke="#5aa878" stroke-width="1"/><path d="M20.5 19.5V27.5M16.5 23.5H24.5" stroke="#fff" stroke-width="2.2"/></svg>
<svg class="a" style="left:57px;top:57px" width="33" height="28" viewBox="0 0 33 28"><path d="M1 2H11L14 5H27V11H1Z" fill="#dca85a" stroke="#b88a40" stroke-width="1"/><path d="M1 26L4 10H32L29 26Z" fill="#f4c878" stroke="#b88a40" stroke-width="1"/></svg>
<svg class="a" style="left:101px;top:55px" width="32" height="32" viewBox="0 0 32 32"><path d="M1 1H26L31 6V31H1Z" fill="#d8c8ec" stroke="#a890c8" stroke-width="1.2"/><rect x="8" y="2" width="15" height="9" fill="#7a8494"/><rect x="10" y="3" width="11" height="7" fill="#c8d0dc"/><rect x="18" y="4" width="2" height="5" fill="#5a6474"/><rect x="5" y="16" width="23" height="14" fill="#fff" stroke="#a890c8" stroke-width="0.8"/><path d="M7 20H26M7 24H26" stroke="#a8d0f0" stroke-width="1.2"/></svg>
<svg class="a" style="left:143px;top:55px" width="32" height="32" viewBox="0 0 32 32"><rect x="8" y="1" width="16" height="9" fill="#fff" stroke="#8a96a8" stroke-width="1.2"/><rect x="1" y="8" width="30" height="15" rx="2" fill="#8a9ab0" stroke="#6a7a90" stroke-width="1"/><rect x="6" y="8" width="20" height="7" fill="#6ea0e8"/><circle cx="28" cy="12" r="1" fill="#f0d040"/><rect x="6" y="18" width="20" height="13" fill="#fff" stroke="#8a96a8" stroke-width="1.2"/><path d="M9 23H23M9 27H23" stroke="#9aa6b4" stroke-width="1.2"/></svg>
<svg class="a" style="left:196px;top:56px" width="30" height="31" viewBox="0 0 30 31"><path d="M2 1.5H15L21 7.5V28H2Z" fill="#fff" stroke="#9aa6b4" stroke-width="1.5"/><path d="M15 1.5V7.5H21" fill="#e8ecf0" stroke="#9aa6b4" stroke-width="1.5"/><circle cx="16" cy="16.5" r="6" fill="#c8e4fa" stroke="#8a96a8" stroke-width="1.6"/><path d="M20.5 21L27 27.5" stroke="#8a96a8" stroke-width="2.6" stroke-linecap="round"/></svg>
<svg class="a" style="left:426px;top:56px" width="26" height="30" viewBox="0 0 26 30"><rect x="1" y="1" width="24" height="28" rx="1" fill="#7aa8e8" stroke="#5a84c4" stroke-width="1"/><rect x="1" y="1" width="5" height="28" fill="#5a84c4"/><rect x="9" y="6" width="12" height="8" fill="#fff"/><path d="M11 9H19M11 11.5H19" stroke="#a8c0d8" stroke-width="1"/></svg>
<svg class="a" style="left:474px;top:54px" width="36" height="35" viewBox="0 0 36 35"><path d="M1 25C1 20 5 18 9 18C13 18 17 20 17 25Z" fill="#f0a0a8" stroke="#d05868" stroke-width="0.8"/><path d="M4 12C4 4 7 1 11 1C15 1 17 4 17 10C17 16 15 19 11 19C7 19 4 17 4 12Z" fill="#b86a40"/><ellipse cx="11" cy="12" rx="4.5" ry="5.5" fill="#f6cc90"/><path d="M8 33C8 27 13 24 20 24C27 24 32 27 32 33Z" fill="#b8e0b8" stroke="#2a8a3a" stroke-width="1"/><path d="M13 13C13 6 15 3 20 3C25 3 27 6 27 13C27 20 24 24 20 24C16 24 13 20 13 13Z" fill="#f4d090" stroke="#d8b070" stroke-width="0.6"/><ellipse cx="20" cy="15" rx="5.5" ry="7.5" fill="#f8dca8"/></svg>
<svg class="a" style="left:524px;top:54px" width="26" height="33" viewBox="0 0 26 33"><rect x="1.5" y="3" width="23.5" height="28" fill="#ffc8a0" stroke="#b87858" stroke-width="1"/><rect x="13" y="5.5" width="10" height="24.5" fill="#7a6066"/><rect x="13" y="5.5" width="5" height="24.5" fill="#4e3c42"/><path d="M3.5 4.5L13 1V32L3.5 30Z" fill="#ffc8a0" stroke="#b87858" stroke-width="1"/><rect x="8.5" y="17.5" width="1.5" height="1.5" fill="#7a4020"/></svg>
<svg class="a" style="left:564px;top:56px" width="34" height="30" viewBox="0 0 34 30"><path d="M7 13V22C7 27 27 27 27 22V13Z" fill="#3c3e44"/><path d="M1 12L17 3L33 12L17 21Z" fill="#5c5e64" stroke="#1e2430" stroke-width="1.5"/><path d="M17 12L6 14V23" stroke="#f0a020" stroke-width="1.3" fill="none"/><path d="M4 22L6 27L8 22Z" fill="#f0a020"/></svg>
<svg class="a" style="left:656px;top:55px" width="34" height="33" viewBox="0 0 34 33"><path d="M1 32C1 23 6 20 13 20C20 20 25 23 25 32Z" fill="#7cc890" stroke="#4a9a62" stroke-width="0.8"/><circle cx="13" cy="11" r="8" fill="#f4cc88" stroke="#c8985a" stroke-width="0.6"/><path d="M5 10C5 3 9 1 13 1C18 1 21 3 21 10C19 6 16 5 13 5C9 5 7 7 5 10Z" fill="#8a5a38"/><rect x="18" y="17" width="15" height="15" rx="1.5" fill="#4a8ae0"/><rect x="20" y="19" width="11" height="11" fill="#fff" opacity="0.95"/><path d="M22 24L25 27L30 21" stroke="#4a8ae0" stroke-width="2" fill="none"/></svg>
<svg class="a" style="left:733px;top:54px" width="34" height="34" viewBox="0 0 34 34"><path d="M12.4 8.7L19.6 8.7L22.6 16.4L19.6 23.5L12.4 23.5L8.4 16.4Z M3.3 8.7L8.4 16.4 M19.6 8.7L24.7 3.2 M22.6 16.4L30.2 12.3 M12.4 23.5L7.4 30.2 M19.6 23.5L24.7 30.2" stroke="#8a94a8" stroke-width="1.2" fill="none"/><g stroke-width="1"><circle cx="3.3" cy="8.7" r="2.6" fill="#6a9ae0" stroke="#4a7ac0"/><circle cx="12.4" cy="8.7" r="2.6" fill="#f8c0c0" stroke="#e05a5a"/><circle cx="19.6" cy="8.7" r="2.6" fill="#6a9ae0" stroke="#4a7ac0"/><circle cx="24.7" cy="3.2" r="2.5" fill="#a8d8b0" stroke="#5aa870"/><circle cx="30.2" cy="12.3" r="2.6" fill="#f08080" stroke="#e05a5a"/><circle cx="22.6" cy="16.4" r="2.6" fill="#f8c0c0" stroke="#e05a5a"/><circle cx="8.4" cy="16.4" r="2.6" fill="#f8c0c0" stroke="#e05a5a"/><circle cx="12.4" cy="23.5" r="2.6" fill="#6a9ae0" stroke="#4a7ac0"/><circle cx="19.6" cy="23.5" r="2.6" fill="#a8d8b0" stroke="#5aa870"/><circle cx="7.4" cy="30.2" r="2.5" fill="#6a9ae0" stroke="#4a7ac0"/><circle cx="24.7" cy="30.2" r="2.5" fill="#a8d8b0" stroke="#5aa870"/></g></svg>
<svg class="a" style="left:788px;top:55px" width="32" height="32" viewBox="0 0 32 32"><path d="M16 1L20 3.5L24.5 3L26.5 7L30.5 9L30 13.5L31.5 17.5L29 21L28.5 25.5L24.5 27L21.5 30.5L17 30L13 31.5L9.5 29L5 28.5L3.5 24.5L0.5 21.5L1 17L-0.5 13L2 9.5L2.5 5L6.5 3.5L9.5 0.5L14 1Z" transform="translate(0.5 0.3) scale(0.97)" fill="#b4e0bc" stroke="#60b078" stroke-width="1"/><path d="M9 16L14 21L23 11" stroke="#fff" stroke-width="3" fill="none"/></svg>
<svg class="a" style="left:840px;top:53px" width="32" height="34" viewBox="0 0 32 34"><path d="M8 3H24L29 29H3Z" fill="#f07074" stroke="#d85058" stroke-width="1"/><path d="M10 4H15L13 28H6Z" fill="#f8a0a4" opacity="0.7"/><path d="M19 4H23L27 28H22Z" fill="#f48a8e" opacity="0.6"/><circle cx="16" cy="14.5" r="2.8" fill="none" stroke="#c83038" stroke-width="1.1"/><rect x="1" y="29" width="30" height="4" rx="1" fill="#b8c4d0" stroke="#8a98a8" stroke-width="0.8"/></svg>
<svg class="a" style="left:898px;top:74px" width="6" height="5" viewBox="0 0 6 5"><rect x="1" y="1.5" width="5" height="2" fill="#f0a040"/></svg>
<div class="a" style="left:146px;top:173px;width:713px;height:549px;background:#f0f0f0;border:1px solid #1a84d8;box-shadow:0 4px 18px rgba(0,0,0,0.32)"></div>
<div class="a" style="left:147px;top:174px;width:711px;height:30px;background:#fff"></div>
<div class="t" style="left:156px;top:182px;font-size:12px;color:#000">Класове</div>
<div class="a" style="left:739px;top:188px;width:10px;height:1px;background:#000"></div>
<div class="a" style="left:784px;top:183px;width:10px;height:10px;border:1px solid #000"></div>
<svg class="a" style="left:829px;top:182px" width="12" height="12"><path d="M1 1L11 11M11 1L1 11" stroke="#000" stroke-width="1.1"/></svg>
<div class="t" style="left:254px;top:218px;font-size:11.5px;color:#000">Въведи класове :</div>
<div class="a" style="left:241px;top:233px;width:449px;height:421px;border:1px solid #828790;background:#fff"></div>
<div class="a" style="left:242px;top:234px;width:430px;height:25px;background:#f0f0f0;border-bottom:1px solid #a8a8a8"></div>
<div class="t" style="left:248px;top:241px;font-size:11.5px;color:#000">Име</div>
<div class="a" style="left:402px;top:235px;width:1px;height:23px;background:#a8a8a8"></div>
<div class="t" style="left:409px;top:241px;font-size:11.5px;color:#000">Кратко</div>
<div class="a" style="left:452px;top:235px;width:1px;height:23px;background:#a8a8a8"></div>
<div class="t" style="left:453px;width:44px;text-align:right;top:241px;font-size:11.5px;color:#000">Брой</div>
<div class="a" style="left:502px;top:235px;width:1px;height:23px;background:#a8a8a8"></div>
<div class="t" style="left:509px;top:241px;font-size:11.5px;color:#000">Условия</div>
<div class="a" style="left:562px;top:235px;width:1px;height:23px;background:#a8a8a8"></div>
<div class="t" style="left:569px;top:241px;font-size:11.5px;color:#000">Разре...</div>
<div class="a" style="left:622px;top:235px;width:1px;height:23px;background:#a8a8a8"></div>
<div class="t" style="left:629px;top:241px;font-size:11.5px;color:#000">Подго...</div>
<div class="a" style="left:242px;top:259px;width:430px;height:21px;background:#ffffff;overflow:hidden">
<svg class="a" style="left:6px;top:2px" width="16" height="16"><path d="M0 13.5C0 10 1.5 8.5 4 8.5C6.5 8.5 7.5 10 7.5 13.5Z" fill="#e83850"/><ellipse cx="4.8" cy="5.6" rx="4" ry="5.4" fill="#a86a48"/><ellipse cx="4.6" cy="6.8" rx="2.4" ry="3.4" fill="#f0c488"/><path d="M2.5 16C2.5 12.5 5.5 11 9 11C12.5 11 15.5 12.5 15.5 16Z" fill="#1e9040"/><ellipse cx="9.2" cy="6.4" rx="4" ry="5.2" fill="#eccc88"/><ellipse cx="9.2" cy="7.4" rx="3.1" ry="4.3" fill="#f8d8a0"/><rect x="8" y="10.5" width="2.4" height="2" fill="#f8d8a0"/></svg>
<div class="t" style="left:27px;top:5px;font-size:11.5px;color:#000">3 а</div>
<div class="t" style="left:166px;top:5px;font-size:11.5px;color:#000">3 а</div>
<div class="t" style="left:211px;width:44px;text-align:right;top:5px;font-size:11.5px;color:#000">26</div>
<svg class="a" style="left:261px;top:0" width="57" height="19"><rect x="0" y="0" width="57" height="19" fill="#000"/><rect x="1" y="1" width="55" height="2" fill="#fff"/><rect x="1" y="4" width="7" height="2" fill="#00e000"/><rect x="9" y="4" width="7" height="2" fill="#00e000"/><rect x="17" y="4" width="7" height="2" fill="#00e000"/><rect x="25" y="4" width="7" height="2" fill="#00e000"/><rect x="33" y="4" width="7" height="2" fill="#00e000"/><rect x="41" y="4" width="7" height="2" fill="#00e000"/><rect x="49" y="4" width="7" height="2" fill="#00e000"/><rect x="1" y="7" width="7" height="2" fill="#00e000"/><rect x="9" y="7" width="7" height="2" fill="#00e000"/><rect x="17" y="7" width="7" height="2" fill="#00e000"/><rect x="25" y="7" width="7" height="2" fill="#00e000"/><rect x="33" y="7" width="7" height="2" fill="#00e000"/><rect x="41" y="7" width="7" height="2" fill="#00e000"/><rect x="49" y="7" width="7" height="2" fill="#00e000"/><rect x="1" y="10" width="7" height="2" fill="#00e000"/><rect x="9" y="10" width="7" height="2" fill="#00e000"/><rect x="17" y="10" width="7" height="2" fill="#00e000"/><rect x="25" y="10" width="7" height="2" fill="#00e000"/><rect x="33" y="10" width="7" height="2" fill="#00e000"/><rect x="41" y="10" width="7" height="2" fill="#00e000"/><rect x="49" y="10" width="7" height="2" fill="#00e000"/><rect x="1" y="13" width="7" height="2" fill="#00e000"/><rect x="9" y="13" width="7" height="2" fill="#00e000"/><rect x="17" y="13" width="7" height="2" fill="#00e000"/><rect x="25" y="13" width="7" height="2" fill="#00e000"/><rect x="33" y="13" width="7" height="2" fill="#00e000"/><rect x="41" y="13" width="7" height="2" fill="#00e000"/><rect x="49" y="13" width="7" height="2" fill="#00e000"/><rect x="1" y="16" width="7" height="2" fill="#00e000"/><rect x="9" y="16" width="7" height="2" fill="#00e000"/><rect x="17" y="16" width="7" height="2" fill="#00e000"/><rect x="25" y="16" width="7" height="2" fill="#00e000"/><rect x="33" y="16" width="7" height="2" fill="#00e000"/><rect x="41" y="16" width="7" height="2" fill="#00e000"/><rect x="49" y="16" width="7" height="2" fill="#00e000"/></svg>
</div>
<div class="a" style="left:242px;top:280px;width:430px;height:21px;background:#f3f3f3;overflow:hidden">
<svg class="a" style="left:6px;top:2px" width="16" height="16"><path d="M0 13.5C0 10 1.5 8.5 4 8.5C6.5 8.5 7.5 10 7.5 13.5Z" fill="#e83850"/><ellipse cx="4.8" cy="5.6" rx="4" ry="5.4" fill="#a86a48"/><ellipse cx="4.6" cy="6.8" rx="2.4" ry="3.4" fill="#f0c488"/><path d="M2.5 16C2.5 12.5 5.5 11 9 11C12.5 11 15.5 12.5 15.5 16Z" fill="#1e9040"/><ellipse cx="9.2" cy="6.4" rx="4" ry="5.2" fill="#eccc88"/><ellipse cx="9.2" cy="7.4" rx="3.1" ry="4.3" fill="#f8d8a0"/><rect x="8" y="10.5" width="2.4" height="2" fill="#f8d8a0"/></svg>
<div class="t" style="left:27px;top:5px;font-size:11.5px;color:#000">3 б</div>
<div class="t" style="left:166px;top:5px;font-size:11.5px;color:#000">3 б</div>
<div class="t" style="left:211px;width:44px;text-align:right;top:5px;font-size:11.5px;color:#000">26</div>
<svg class="a" style="left:261px;top:0" width="57" height="19"><rect x="0" y="0" width="57" height="19" fill="#000"/><rect x="1" y="1" width="55" height="2" fill="#fff"/><rect x="1" y="4" width="7" height="2" fill="#00e000"/><rect x="9" y="4" width="7" height="2" fill="#00e000"/><rect x="17" y="4" width="7" height="2" fill="#00e000"/><rect x="25" y="4" width="7" height="2" fill="#00e000"/><rect x="33" y="4" width="7" height="2" fill="#00e000"/><rect x="41" y="4" width="7" height="2" fill="#00e000"/><rect x="49" y="4" width="7" height="2" fill="#00e000"/><rect x="1" y="7" width="7" height="2" fill="#00e000"/><rect x="9" y="7" width="7" height="2" fill="#00e000"/><rect x="17" y="7" width="7" height="2" fill="#00e000"/><rect x="25" y="7" width="7" height="2" fill="#00e000"/><rect x="33" y="7" width="7" height="2" fill="#00e000"/><rect x="41" y="7" width="7" height="2" fill="#00e000"/><rect x="49" y="7" width="7" height="2" fill="#00e000"/><rect x="1" y="10" width="7" height="2" fill="#00e000"/><rect x="9" y="10" width="7" height="2" fill="#00e000"/><rect x="17" y="10" width="7" height="2" fill="#00e000"/><rect x="25" y="10" width="7" height="2" fill="#00e000"/><rect x="33" y="10" width="7" height="2" fill="#00e000"/><rect x="41" y="10" width="7" height="2" fill="#00e000"/><rect x="49" y="10" width="7" height="2" fill="#00e000"/><rect x="1" y="13" width="7" height="2" fill="#00e000"/><rect x="9" y="13" width="7" height="2" fill="#00e000"/><rect x="17" y="13" width="7" height="2" fill="#00e000"/><rect x="25" y="13" width="7" height="2" fill="#00e000"/><rect x="33" y="13" width="7" height="2" fill="#00e000"/><rect x="41" y="13" width="7" height="2" fill="#00e000"/><rect x="49" y="13" width="7" height="2" fill="#00e000"/><rect x="1" y="16" width="7" height="2" fill="#00e000"/><rect x="9" y="16" width="7" height="2" fill="#00e000"/><rect x="17" y="16" width="7" height="2" fill="#00e000"/><rect x="25" y="16" width="7" height="2" fill="#00e000"/><rect x="33" y="16" width="7" height="2" fill="#00e000"/><rect x="41" y="16" width="7" height="2" fill="#00e000"/><rect x="49" y="16" width="7" height="2" fill="#00e000"/></svg>
</div>
<div class="a" style="left:242px;top:301px;width:430px;height:21px;background:#ffffff;overflow:hidden">
<svg class="a" style="left:6px;top:2px" width="16" height="16"><path d="M0 13.5C0 10 1.5 8.5 4 8.5C6.5 8.5 7.5 10 7.5 13.5Z" fill="#e83850"/><ellipse cx="4.8" cy="5.6" rx="4" ry="5.4" fill="#a86a48"/><ellipse cx="4.6" cy="6.8" rx="2.4" ry="3.4" fill="#f0c488"/><path d="M2.5 16C2.5 12.5 5.5 11 9 11C12.5 11 15.5 12.5 15.5 16Z" fill="#1e9040"/><ellipse cx="9.2" cy="6.4" rx="4" ry="5.2" fill="#eccc88"/><ellipse cx="9.2" cy="7.4" rx="3.1" ry="4.3" fill="#f8d8a0"/><rect x="8" y="10.5" width="2.4" height="2" fill="#f8d8a0"/></svg>
<div class="t" style="left:27px;top:5px;font-size:11.5px;color:#000">3 в</div>
<div class="t" style="left:166px;top:5px;font-size:11.5px;color:#000">3 в</div>
<div class="t" style="left:211px;width:44px;text-align:right;top:5px;font-size:11.5px;color:#000">26</div>
<svg class="a" style="left:261px;top:0" width="57" height="19"><rect x="0" y="0" width="57" height="19" fill="#000"/><rect x="1" y="1" width="55" height="2" fill="#fff"/><rect x="1" y="4" width="7" height="2" fill="#00e000"/><rect x="9" y="4" width="7" height="2" fill="#00e000"/><rect x="17" y="4" width="7" height="2" fill="#00e000"/><rect x="25" y="4" width="7" height="2" fill="#00e000"/><rect x="33" y="4" width="7" height="2" fill="#00e000"/><rect x="41" y="4" width="7" height="2" fill="#00e000"/><rect x="49" y="4" width="7" height="2" fill="#00e000"/><rect x="1" y="7" width="7" height="2" fill="#00e000"/><rect x="9" y="7" width="7" height="2" fill="#00e000"/><rect x="17" y="7" width="7" height="2" fill="#00e000"/><rect x="25" y="7" width="7" height="2" fill="#00e000"/><rect x="33" y="7" width="7" height="2" fill="#00e000"/><rect x="41" y="7" width="7" height="2" fill="#00e000"/><rect x="49" y="7" width="7" height="2" fill="#00e000"/><rect x="1" y="10" width="7" height="2" fill="#00e000"/><rect x="9" y="10" width="7" height="2" fill="#00e000"/><rect x="17" y="10" width="7" height="2" fill="#00e000"/><rect x="25" y="10" width="7" height="2" fill="#00e000"/><rect x="33" y="10" width="7" height="2" fill="#00e000"/><rect x="41" y="10" width="7" height="2" fill="#00e000"/><rect x="49" y="10" width="7" height="2" fill="#00e000"/><rect x="1" y="13" width="7" height="2" fill="#00e000"/><rect x="9" y="13" width="7" height="2" fill="#00e000"/><rect x="17" y="13" width="7" height="2" fill="#00e000"/><rect x="25" y="13" width="7" height="2" fill="#00e000"/><rect x="33" y="13" width="7" height="2" fill="#00e000"/><rect x="41" y="13" width="7" height="2" fill="#00e000"/><rect x="49" y="13" width="7" height="2" fill="#00e000"/><rect x="1" y="16" width="7" height="2" fill="#00e000"/><rect x="9" y="16" width="7" height="2" fill="#00e000"/><rect x="17" y="16" width="7" height="2" fill="#00e000"/><rect x="25" y="16" width="7" height="2" fill="#00e000"/><rect x="33" y="16" width="7" height="2" fill="#00e000"/><rect x="41" y="16" width="7" height="2" fill="#00e000"/><rect x="49" y="16" width="7" height="2" fill="#00e000"/></svg>
</div>
<div class="a" style="left:242px;top:322px;width:430px;height:21px;background:#f3f3f3;overflow:hidden">
<svg class="a" style="left:6px;top:2px" width="16" height="16"><path d="M0 13.5C0 10 1.5 8.5 4 8.5C6.5 8.5 7.5 10 7.5 13.5Z" fill="#e83850"/><ellipse cx="4.8" cy="5.6" rx="4" ry="5.4" fill="#a86a48"/><ellipse cx="4.6" cy="6.8" rx="2.4" ry="3.4" fill="#f0c488"/><path d="M2.5 16C2.5 12.5 5.5 11 9 11C12.5 11 15.5 12.5 15.5 16Z" fill="#1e9040"/><ellipse cx="9.2" cy="6.4" rx="4" ry="5.2" fill="#eccc88"/><ellipse cx="9.2" cy="7.4" rx="3.1" ry="4.3" fill="#f8d8a0"/><rect x="8" y="10.5" width="2.4" height="2" fill="#f8d8a0"/></svg>
<div class="t" style="left:27px;top:5px;font-size:11.5px;color:#000">4 а</div>
<div class="t" style="left:166px;top:5px;font-size:11.5px;color:#000">4 а</div>
<div class="t" style="left:211px;width:44px;text-align:right;top:5px;font-size:11.5px;color:#000">22</div>
<svg class="a" style="left:261px;top:0" width="57" height="19"><rect x="0" y="0" width="57" height="19" fill="#000"/><rect x="1" y="1" width="55" height="2" fill="#fff"/><rect x="1" y="4" width="7" height="2" fill="#00e000"/><rect x="9" y="4" width="7" height="2" fill="#00e000"/><rect x="17" y="4" width="7" height="2" fill="#00e000"/><rect x="25" y="4" width="7" height="2" fill="#00e000"/><rect x="33" y="4" width="7" height="2" fill="#00e000"/><rect x="41" y="4" width="7" height="2" fill="#00e000"/><rect x="49" y="4" width="7" height="2" fill="#00e000"/><rect x="1" y="7" width="7" height="2" fill="#00e000"/><rect x="9" y="7" width="7" height="2" fill="#00e000"/><rect x="17" y="7" width="7" height="2" fill="#00e000"/><rect x="25" y="7" width="7" height="2" fill="#00e000"/><rect x="33" y="7" width="7" height="2" fill="#00e000"/><rect x="41" y="7" width="7" height="2" fill="#00e000"/><rect x="49" y="7" width="7" height="2" fill="#00e000"/><rect x="1" y="10" width="7" height="2" fill="#00e000"/><rect x="9" y="10" width="7" height="2" fill="#00e000"/><rect x="17" y="10" width="7" height="2" fill="#00e000"/><rect x="25" y="10" width="7" height="2" fill="#00e000"/><rect x="33" y="10" width="7" height="2" fill="#00e000"/><rect x="41" y="10" width="7" height="2" fill="#00e000"/><rect x="49" y="10" width="7" height="2" fill="#00e000"/><rect x="1" y="13" width="7" height="2" fill="#00e000"/><rect x="9" y="13" width="7" height="2" fill="#00e000"/><rect x="17" y="13" width="7" height="2" fill="#00e000"/><rect x="25" y="13" width="7" height="2" fill="#00e000"/><rect x="33" y="13" width="7" height="2" fill="#00e000"/><rect x="41" y="13" width="7" height="2" fill="#00e000"/><rect x="49" y="13" width="7" height="2" fill="#00e000"/><rect x="1" y="16" width="7" height="2" fill="#00e000"/><rect x="9" y="16" width="7" height="2" fill="#00e000"/><rect x="17" y="16" width="7" height="2" fill="#00e000"/><rect x="25" y="16" width="7" height="2" fill="#00e000"/><rect x="33" y="16" width="7" height="2" fill="#00e000"/><rect x="41" y="16" width="7" height="2" fill="#00e000"/><rect x="49" y="16" width="7" height="2" fill="#00e000"/></svg>
</div>
<div class="a" style="left:242px;top:343px;width:430px;height:21px;background:#ffffff;overflow:hidden">
<svg class="a" style="left:6px;top:2px" width="16" height="16"><path d="M0 13.5C0 10 1.5 8.5 4 8.5C6.5 8.5 7.5 10 7.5 13.5Z" fill="#e83850"/><ellipse cx="4.8" cy="5.6" rx="4" ry="5.4" fill="#a86a48"/><ellipse cx="4.6" cy="6.8" rx="2.4" ry="3.4" fill="#f0c488"/><path d="M2.5 16C2.5 12.5 5.5 11 9 11C12.5 11 15.5 12.5 15.5 16Z" fill="#1e9040"/><ellipse cx="9.2" cy="6.4" rx="4" ry="5.2" fill="#eccc88"/><ellipse cx="9.2" cy="7.4" rx="3.1" ry="4.3" fill="#f8d8a0"/><rect x="8" y="10.5" width="2.4" height="2" fill="#f8d8a0"/></svg>
<div class="t" style="left:27px;top:5px;font-size:11.5px;color:#000">4 б</div>
<div class="t" style="left:166px;top:5px;font-size:11.5px;color:#000">4 б</div>
<div class="t" style="left:211px;width:44px;text-align:right;top:5px;font-size:11.5px;color:#000">26</div>
<svg class="a" style="left:261px;top:0" width="57" height="19"><rect x="0" y="0" width="57" height="19" fill="#000"/><rect x="1" y="1" width="55" height="2" fill="#fff"/><rect x="1" y="4" width="7" height="2" fill="#00e000"/><rect x="9" y="4" width="7" height="2" fill="#00e000"/><rect x="17" y="4" width="7" height="2" fill="#00e000"/><rect x="25" y="4" width="7" height="2" fill="#00e000"/><rect x="33" y="4" width="7" height="2" fill="#00e000"/><rect x="41" y="4" width="7" height="2" fill="#00e000"/><rect x="49" y="4" width="7" height="2" fill="#00e000"/><rect x="1" y="7" width="7" height="2" fill="#00e000"/><rect x="9" y="7" width="7" height="2" fill="#00e000"/><rect x="17" y="7" width="7" height="2" fill="#00e000"/><rect x="25" y="7" width="7" height="2" fill="#00e000"/><rect x="33" y="7" width="7" height="2" fill="#00e000"/><rect x="41" y="7" width="7" height="2" fill="#00e000"/><rect x="49" y="7" width="7" height="2" fill="#00e000"/><rect x="1" y="10" width="7" height="2" fill="#00e000"/><rect x="9" y="10" width="7" height="2" fill="#00e000"/><rect x="17" y="10" width="7" height="2" fill="#00e000"/><rect x="25" y="10" width="7" height="2" fill="#00e000"/><rect x="33" y="10" width="7" height="2" fill="#00e000"/><rect x="41" y="10" width="7" height="2" fill="#00e000"/><rect x="49" y="10" width="7" height="2" fill="#00e000"/><rect x="1" y="13" width="7" height="2" fill="#00e000"/><rect x="9" y="13" width="7" height="2" fill="#00e000"/><rect x="17" y="13" width="7" height="2" fill="#00e000"/><rect x="25" y="13" width="7" height="2" fill="#00e000"/><rect x="33" y="13" width="7" height="2" fill="#00e000"/><rect x="41" y="13" width="7" height="2" fill="#00e000"/><rect x="49" y="13" width="7" height="2" fill="#00e000"/><rect x="1" y="16" width="7" height="2" fill="#00e000"/><rect x="9" y="16" width="7" height="2" fill="#00e000"/><rect x="17" y="16" width="7" height="2" fill="#00e000"/><rect x="25" y="16" width="7" height="2" fill="#00e000"/><rect x="33" y="16" width="7" height="2" fill="#00e000"/><rect x="41" y="16" width="7" height="2" fill="#00e000"/><rect x="49" y="16" width="7" height="2" fill="#00e000"/></svg>
</div>
<div class="a" style="left:242px;top:364px;width:430px;height:21px;background:#fff;overflow:hidden">
<div class="a" style="left:5px;top:0;width:425px;height:21px;background:#0078d7"></div>
<svg class="a" style="left:6px;top:2px" width="16" height="16"><path d="M0 13.5C0 10 1.5 8.5 4 8.5C6.5 8.5 7.5 10 7.5 13.5Z" fill="#e83850"/><ellipse cx="4.8" cy="5.6" rx="4" ry="5.4" fill="#a86a48"/><ellipse cx="4.6" cy="6.8" rx="2.4" ry="3.4" fill="#f0c488"/><path d="M2.5 16C2.5 12.5 5.5 11 9 11C12.5 11 15.5 12.5 15.5 16Z" fill="#1e9040"/><ellipse cx="9.2" cy="6.4" rx="4" ry="5.2" fill="#eccc88"/><ellipse cx="9.2" cy="7.4" rx="3.1" ry="4.3" fill="#f8d8a0"/><rect x="8" y="10.5" width="2.4" height="2" fill="#f8d8a0"/></svg>
<div class="t" style="left:27px;top:5px;font-size:11.5px;color:#fff">5 а</div>
<div class="t" style="left:166px;top:5px;font-size:11.5px;color:#fff">5 а</div>
<div class="t" style="left:211px;width:44px;text-align:right;top:5px;font-size:11.5px;color:#fff">34</div>
<svg class="a" style="left:261px;top:0" width="57" height="19"><rect x="0" y="0" width="57" height="19" fill="#000"/><rect x="1" y="1" width="55" height="2" fill="#fff"/><rect x="1" y="4" width="7" height="2" fill="#00e000"/><rect x="9" y="4" width="7" height="2" fill="#00e000"/><rect x="17" y="4" width="7" height="2" fill="#00e000"/><rect x="25" y="4" width="7" height="2" fill="#00e000"/><rect x="33" y="4" width="7" height="2" fill="#00e000"/><rect x="41" y="4" width="7" height="2" fill="#00e000"/><rect x="49" y="4" width="7" height="2" fill="#00e000"/><rect x="1" y="7" width="7" height="2" fill="#00e000"/><rect x="9" y="7" width="7" height="2" fill="#00e000"/><rect x="17" y="7" width="7" height="2" fill="#00e000"/><rect x="25" y="7" width="7" height="2" fill="#00e000"/><rect x="33" y="7" width="7" height="2" fill="#00e000"/><rect x="41" y="7" width="7" height="2" fill="#00e000"/><rect x="49" y="7" width="7" height="2" fill="#00e000"/><rect x="1" y="10" width="7" height="2" fill="#00e000"/><rect x="9" y="10" width="7" height="2" fill="#00e000"/><rect x="17" y="10" width="7" height="2" fill="#00e000"/><rect x="25" y="10" width="7" height="2" fill="#00e000"/><rect x="33" y="10" width="7" height="2" fill="#00e000"/><rect x="41" y="10" width="7" height="2" fill="#00e000"/><rect x="49" y="10" width="7" height="2" fill="#00e000"/><rect x="1" y="13" width="7" height="2" fill="#00e000"/><rect x="9" y="13" width="7" height="2" fill="#00e000"/><rect x="17" y="13" width="7" height="2" fill="#00e000"/><rect x="25" y="13" width="7" height="2" fill="#00e000"/><rect x="33" y="13" width="7" height="2" fill="#00e000"/><rect x="41" y="13" width="7" height="2" fill="#00e000"/><rect x="49" y="13" width="7" height="2" fill="#00e000"/><rect x="1" y="16" width="7" height="2" fill="#00e000"/><rect x="9" y="16" width="7" height="2" fill="#00e000"/><rect x="17" y="16" width="7" height="2" fill="#00e000"/><rect x="25" y="16" width="7" height="2" fill="#00e000"/><rect x="33" y="16" width="7" height="2" fill="#00e000"/><rect x="41" y="16" width="7" height="2" fill="#00e000"/><rect x="49" y="16" width="7" height="2" fill="#00e000"/></svg>
<div class="a" style="left:5px;top:0;width:425px;height:21px;border:1px solid #ff9a30"></div>
<div class="a" style="left:5px;top:0;width:425px;height:21px;border:1px dotted #000"></div>
</div>
<div class="a" style="left:242px;top:385px;width:430px;height:21px;background:#ffffff;overflow:hidden">
<svg class="a" style="left:6px;top:2px" width="16" height="16"><path d="M0 13.5C0 10 1.5 8.5 4 8.5C6.5 8.5 7.5 10 7.5 13.5Z" fill="#e83850"/><ellipse cx="4.8" cy="5.6" rx="4" ry="5.4" fill="#a86a48"/><ellipse cx="4.6" cy="6.8" rx="2.4" ry="3.4" fill="#f0c488"/><path d="M2.5 16C2.5 12.5 5.5 11 9 11C12.5 11 15.5 12.5 15.5 16Z" fill="#1e9040"/><ellipse cx="9.2" cy="6.4" rx="4" ry="5.2" fill="#eccc88"/><ellipse cx="9.2" cy="7.4" rx="3.1" ry="4.3" fill="#f8d8a0"/><rect x="8" y="10.5" width="2.4" height="2" fill="#f8d8a0"/></svg>
<div class="t" style="left:27px;top:5px;font-size:11.5px;color:#000">5 б</div>
<div class="t" style="left:166px;top:5px;font-size:11.5px;color:#000">5 б</div>
<div class="t" style="left:211px;width:44px;text-align:right;top:5px;font-size:11.5px;color:#000">35</div>
<svg class="a" style="left:261px;top:0" width="57" height="19"><rect x="0" y="0" width="57" height="19" fill="#000"/><rect x="1" y="1" width="55" height="2" fill="#fff"/><rect x="1" y="4" width="7" height="2" fill="#00e000"/><rect x="9" y="4" width="7" height="2" fill="#00e000"/><rect x="17" y="4" width="7" height="2" fill="#00e000"/><rect x="25" y="4" width="7" height="2" fill="#00e000"/><rect x="33" y="4" width="7" height="2" fill="#00e000"/><rect x="41" y="4" width="7" height="2" fill="#00e000"/><rect x="49" y="4" width="7" height="2" fill="#00e000"/><rect x="1" y="7" width="7" height="2" fill="#00e000"/><rect x="9" y="7" width="7" height="2" fill="#00e000"/><rect x="17" y="7" width="7" height="2" fill="#00e000"/><rect x="25" y="7" width="7" height="2" fill="#00e000"/><rect x="33" y="7" width="7" height="2" fill="#00e000"/><rect x="41" y="7" width="7" height="2" fill="#00e000"/><rect x="49" y="7" width="7" height="2" fill="#00e000"/><rect x="1" y="10" width="7" height="2" fill="#00e000"/><rect x="9" y="10" width="7" height="2" fill="#00e000"/><rect x="17" y="10" width="7" height="2" fill="#00e000"/><rect x="25" y="10" width="7" height="2" fill="#00e000"/><rect x="33" y="10" width="7" height="2" fill="#00e000"/><rect x="41" y="10" width="7" height="2" fill="#00e000"/><rect x="49" y="10" width="7" height="2" fill="#00e000"/><rect x="1" y="13" width="7" height="2" fill="#00e000"/><rect x="9" y="13" width="7" height="2" fill="#00e000"/><rect x="17" y="13" width="7" height="2" fill="#00e000"/><rect x="25" y="13" width="7" height="2" fill="#00e000"/><rect x="33" y="13" width="7" height="2" fill="#00e000"/><rect x="41" y="13" width="7" height="2" fill="#00e000"/><rect x="49" y="13" width="7" height="2" fill="#00e000"/><rect x="1" y="16" width="7" height="2" fill="#00e000"/><rect x="9" y="16" width="7" height="2" fill="#00e000"/><rect x="17" y="16" width="7" height="2" fill="#00e000"/><rect x="25" y="16" width="7" height="2" fill="#00e000"/><rect x="33" y="16" width="7" height="2" fill="#00e000"/><rect x="41" y="16" width="7" height="2" fill="#00e000"/><rect x="49" y="16" width="7" height="2" fill="#00e000"/></svg>
</div>
<div class="a" style="left:242px;top:406px;width:430px;height:21px;background:#f3f3f3;overflow:hidden">
<svg class="a" style="left:6px;top:2px" width="16" height="16"><path d="M0 13.5C0 10 1.5 8.5 4 8.5C6.5 8.5 7.5 10 7.5 13.5Z" fill="#e83850"/><ellipse cx="4.8" cy="5.6" rx="4" ry="5.4" fill="#a86a48"/><ellipse cx="4.6" cy="6.8" rx="2.4" ry="3.4" fill="#f0c488"/><path d="M2.5 16C2.5 12.5 5.5 11 9 11C12.5 11 15.5 12.5 15.5 16Z" fill="#1e9040"/><ellipse cx="9.2" cy="6.4" rx="4" ry="5.2" fill="#eccc88"/><ellipse cx="9.2" cy="7.4" rx="3.1" ry="4.3" fill="#f8d8a0"/><rect x="8" y="10.5" width="2.4" height="2" fill="#f8d8a0"/></svg>
<div class="t" style="left:27px;top:5px;font-size:11.5px;color:#000">5 в</div>
<div class="t" style="left:166px;top:5px;font-size:11.5px;color:#000">5 в</div>
<div class="t" style="left:211px;width:44px;text-align:right;top:5px;font-size:11.5px;color:#000">34</div>
<svg class="a" style="left:261px;top:0" width="57" height="19"><rect x="0" y="0" width="57" height="19" fill="#000"/><rect x="1" y="1" width="55" height="2" fill="#fff"/><rect x="1" y="4" width="7" height="2" fill="#00e000"/><rect x="9" y="4" width="7" height="2" fill="#00e000"/><rect x="17" y="4" width="7" height="2" fill="#00e000"/><rect x="25" y="4" width="7" height="2" fill="#00e000"/><rect x="33" y="4" width="7" height="2" fill="#00e000"/><rect x="41" y="4" width="7" height="2" fill="#00e000"/><rect x="49" y="4" width="7" height="2" fill="#00e000"/><rect x="1" y="7" width="7" height="2" fill="#00e000"/><rect x="9" y="7" width="7" height="2" fill="#00e000"/><rect x="17" y="7" width="7" height="2" fill="#00e000"/><rect x="25" y="7" width="7" height="2" fill="#00e000"/><rect x="33" y="7" width="7" height="2" fill="#00e000"/><rect x="41" y="7" width="7" height="2" fill="#00e000"/><rect x="49" y="7" width="7" height="2" fill="#00e000"/><rect x="1" y="10" width="7" height="2" fill="#00e000"/><rect x="9" y="10" width="7" height="2" fill="#00e000"/><rect x="17" y="10" width="7" height="2" fill="#00e000"/><rect x="25" y="10" width="7" height="2" fill="#00e000"/><rect x="33" y="10" width="7" height="2" fill="#00e000"/><rect x="41" y="10" width="7" height="2" fill="#00e000"/><rect x="49" y="10" width="7" height="2" fill="#00e000"/><rect x="1" y="13" width="7" height="2" fill="#00e000"/><rect x="9" y="13" width="7" height="2" fill="#00e000"/><rect x="17" y="13" width="7" height="2" fill="#00e000"/><rect x="25" y="13" width="7" height="2" fill="#00e000"/><rect x="33" y="13" width="7" height="2" fill="#00e000"/><rect x="41" y="13" width="7" height="2" fill="#00e000"/><rect x="49" y="13" width="7" height="2" fill="#00e000"/><rect x="1" y="16" width="7" height="2" fill="#00e000"/><rect x="9" y="16" width="7" height="2" fill="#00e000"/><rect x="17" y="16" width="7" height="2" fill="#00e000"/><rect x="25" y="16" width="7" height="2" fill="#00e000"/><rect x="33" y="16" width="7" height="2" fill="#00e000"/><rect x="41" y="16" width="7" height="2" fill="#00e000"/><rect x="49" y="16" width="7" height="2" fill="#00e000"/></svg>
</div>
<div class="a" style="left:242px;top:427px;width:430px;height:21px;background:#ffffff;overflow:hidden">
<svg class="a" style="left:6px;top:2px" width="16" height="16"><path d="M0 13.5C0 10 1.5 8.5 4 8.5C6.5 8.5 7.5 10 7.5 13.5Z" fill="#e83850"/><ellipse cx="4.8" cy="5.6" rx="4" ry="5.4" fill="#a86a48"/><ellipse cx="4.6" cy="6.8" rx="2.4" ry="3.4" fill="#f0c488"/><path d="M2.5 16C2.5 12.5 5.5 11 9 11C12.5 11 15.5 12.5 15.5 16Z" fill="#1e9040"/><ellipse cx="9.2" cy="6.4" rx="4" ry="5.2" fill="#eccc88"/><ellipse cx="9.2" cy="7.4" rx="3.1" ry="4.3" fill="#f8d8a0"/><rect x="8" y="10.5" width="2.4" height="2" fill="#f8d8a0"/></svg>
<div class="t" style="left:27px;top:5px;font-size:11.5px;color:#000">6 а</div>
<div class="t" style="left:166px;top:5px;font-size:11.5px;color:#000">6 а</div>
<div class="t" style="left:211px;width:44px;text-align:right;top:5px;font-size:11.5px;color:#000">30</div>
<svg class="a" style="left:261px;top:0" width="57" height="19"><rect x="0" y="0" width="57" height="19" fill="#000"/><rect x="1" y="1" width="55" height="2" fill="#fff"/><rect x="1" y="4" width="7" height="2" fill="#00e000"/><rect x="9" y="4" width="7" height="2" fill="#00e000"/><rect x="17" y="4" width="7" height="2" fill="#00e000"/><rect x="25" y="4" width="7" height="2" fill="#00e000"/><rect x="33" y="4" width="7" height="2" fill="#00e000"/><rect x="41" y="4" width="7" height="2" fill="#00e000"/><rect x="49" y="4" width="7" height="2" fill="#00e000"/><rect x="1" y="7" width="7" height="2" fill="#00e000"/><rect x="9" y="7" width="7" height="2" fill="#00e000"/><rect x="17" y="7" width="7" height="2" fill="#00e000"/><rect x="25" y="7" width="7" height="2" fill="#00e000"/><rect x="33" y="7" width="7" height="2" fill="#00e000"/><rect x="41" y="7" width="7" height="2" fill="#00e000"/><rect x="49" y="7" width="7" height="2" fill="#00e000"/><rect x="1" y="10" width="7" height="2" fill="#00e000"/><rect x="9" y="10" width="7" height="2" fill="#00e000"/><rect x="17" y="10" width="7" height="2" fill="#00e000"/><rect x="25" y="10" width="7" height="2" fill="#00e000"/><rect x="33" y="10" width="7" height="2" fill="#00e000"/><rect x="41" y="10" width="7" height="2" fill="#00e000"/><rect x="49" y="10" width="7" height="2" fill="#00e000"/><rect x="1" y="13" width="7" height="2" fill="#00e000"/><rect x="9" y="13" width="7" height="2" fill="#00e000"/><rect x="17" y="13" width="7" height="2" fill="#00e000"/><rect x="25" y="13" width="7" height="2" fill="#00e000"/><rect x="33" y="13" width="7" height="2" fill="#00e000"/><rect x="41" y="13" width="7" height="2" fill="#00e000"/><rect x="49" y="13" width="7" height="2" fill="#00e000"/><rect x="1" y="16" width="7" height="2" fill="#00e000"/><rect x="9" y="16" width="7" height="2" fill="#00e000"/><rect x="17" y="16" width="7" height="2" fill="#00e000"/><rect x="25" y="16" width="7" height="2" fill="#00e000"/><rect x="33" y="16" width="7" height="2" fill="#00e000"/><rect x="41" y="16" width="7" height="2" fill="#00e000"/><rect x="49" y="16" width="7" height="2" fill="#00e000"/></svg>
</div>
<div class="a" style="left:242px;top:448px;width:430px;height:21px;background:#f3f3f3;overflow:hidden">
<svg class="a" style="left:6px;top:2px" width="16" height="16"><path d="M0 13.5C0 10 1.5 8.5 4 8.5C6.5 8.5 7.5 10 7.5 13.5Z" fill="#e83850"/><ellipse cx="4.8" cy="5.6" rx="4" ry="5.4" fill="#a86a48"/><ellipse cx="4.6" cy="6.8" rx="2.4" ry="3.4" fill="#f0c488"/><path d="M2.5 16C2.5 12.5 5.5 11 9 11C12.5 11 15.5 12.5 15.5 16Z" fill="#1e9040"/><ellipse cx="9.2" cy="6.4" rx="4" ry="5.2" fill="#eccc88"/><ellipse cx="9.2" cy="7.4" rx="3.1" ry="4.3" fill="#f8d8a0"/><rect x="8" y="10.5" width="2.4" height="2" fill="#f8d8a0"/></svg>
<div class="t" style="left:27px;top:5px;font-size:11.5px;color:#000">6 б</div>
<div class="t" style="left:166px;top:5px;font-size:11.5px;color:#000">6 б</div>
<div class="t" style="left:211px;width:44px;text-align:right;top:5px;font-size:11.5px;color:#000">27</div>
<svg class="a" style="left:261px;top:0" width="57" height="19"><rect x="0" y="0" width="57" height="19" fill="#000"/><rect x="1" y="1" width="55" height="2" fill="#fff"/><rect x="1" y="4" width="7" height="2" fill="#00e000"/><rect x="9" y="4" width="7" height="2" fill="#00e000"/><rect x="17" y="4" width="7" height="2" fill="#00e000"/><rect x="25" y="4" width="7" height="2" fill="#00e000"/><rect x="33" y="4" width="7" height="2" fill="#00e000"/><rect x="41" y="4" width="7" height="2" fill="#00e000"/><rect x="49" y="4" width="7" height="2" fill="#00e000"/><rect x="1" y="7" width="7" height="2" fill="#00e000"/><rect x="9" y="7" width="7" height="2" fill="#00e000"/><rect x="17" y="7" width="7" height="2" fill="#00e000"/><rect x="25" y="7" width="7" height="2" fill="#00e000"/><rect x="33" y="7" width="7" height="2" fill="#00e000"/><rect x="41" y="7" width="7" height="2" fill="#00e000"/><rect x="49" y="7" width="7" height="2" fill="#00e000"/><rect x="1" y="10" width="7" height="2" fill="#00e000"/><rect x="9" y="10" width="7" height="2" fill="#00e000"/><rect x="17" y="10" width="7" height="2" fill="#00e000"/><rect x="25" y="10" width="7" height="2" fill="#00e000"/><rect x="33" y="10" width="7" height="2" fill="#00e000"/><rect x="41" y="10" width="7" height="2" fill="#00e000"/><rect x="49" y="10" width="7" height="2" fill="#00e000"/><rect x="1" y="13" width="7" height="2" fill="#00e000"/><rect x="9" y="13" width="7" height="2" fill="#00e000"/><rect x="17" y="13" width="7" height="2" fill="#00e000"/><rect x="25" y="13" width="7" height="2" fill="#00e000"/><rect x="33" y="13" width="7" height="2" fill="#00e000"/><rect x="41" y="13" width="7" height="2" fill="#00e000"/><rect x="49" y="13" width="7" height="2" fill="#00e000"/><rect x="1" y="16" width="7" height="2" fill="#00e000"/><rect x="9" y="16" width="7" height="2" fill="#00e000"/><rect x="17" y="16" width="7" height="2" fill="#00e000"/><rect x="25" y="16" width="7" height="2" fill="#00e000"/><rect x="33" y="16" width="7" height="2" fill="#00e000"/><rect x="41" y="16" width="7" height="2" fill="#00e000"/><rect x="49" y="16" width="7" height="2" fill="#00e000"/></svg>
</div>
<div class="a" style="left:242px;top:469px;width:430px;height:21px;background:#ffffff;overflow:hidden">
<svg class="a" style="left:6px;top:2px" width="16" height="16"><path d="M0 13.5C0 10 1.5 8.5 4 8.5C6.5 8.5 7.5 10 7.5 13.5Z" fill="#e83850"/><ellipse cx="4.8" cy="5.6" rx="4" ry="5.4" fill="#a86a48"/><ellipse cx="4.6" cy="6.8" rx="2.4" ry="3.4" fill="#f0c488"/><path d="M2.5 16C2.5 12.5 5.5 11 9 11C12.5 11 15.5 12.5 15.5 16Z" fill="#1e9040"/><ellipse cx="9.2" cy="6.4" rx="4" ry="5.2" fill="#eccc88"/><ellipse cx="9.2" cy="7.4" rx="3.1" ry="4.3" fill="#f8d8a0"/><rect x="8" y="10.5" width="2.4" height="2" fill="#f8d8a0"/></svg>
<div class="t" style="left:27px;top:5px;font-size:11.5px;color:#000">6 в</div>
<div class="t" style="left:166px;top:5px;font-size:11.5px;color:#000">6 в</div>
<div class="t" style="left:211px;width:44px;text-align:right;top:5px;font-size:11.5px;color:#000">27</div>
<svg class="a" style="left:261px;top:0" width="57" height="19"><rect x="0" y="0" width="57" height="19" fill="#000"/><rect x="1" y="1" width="55" height="2" fill="#fff"/><rect x="1" y="4" width="7" height="2" fill="#00e000"/><rect x="9" y="4" width="7" height="2" fill="#00e000"/><rect x="17" y="4" width="7" height="2" fill="#00e000"/><rect x="25" y="4" width="7" height="2" fill="#00e000"/><rect x="33" y="4" width="7" height="2" fill="#00e000"/><rect x="41" y="4" width="7" height="2" fill="#00e000"/><rect x="49" y="4" width="7" height="2" fill="#00e000"/><rect x="1" y="7" width="7" height="2" fill="#00e000"/><rect x="9" y="7" width="7" height="2" fill="#00e000"/><rect x="17" y="7" width="7" height="2" fill="#00e000"/><rect x="25" y="7" width="7" height="2" fill="#00e000"/><rect x="33" y="7" width="7" height="2" fill="#00e000"/><rect x="41" y="7" width="7" height="2" fill="#00e000"/><rect x="49" y="7" width="7" height="2" fill="#00e000"/><rect x="1" y="10" width="7" height="2" fill="#00e000"/><rect x="9" y="10" width="7" height="2" fill="#00e000"/><rect x="17" y="10" width="7" height="2" fill="#00e000"/><rect x="25" y="10" width="7" height="2" fill="#00e000"/><rect x="33" y="10" width="7" height="2" fill="#00e000"/><rect x="41" y="10" width="7" height="2" fill="#00e000"/><rect x="49" y="10" width="7" height="2" fill="#00e000"/><rect x="1" y="13" width="7" height="2" fill="#00e000"/><rect x="9" y="13" width="7" height="2" fill="#00e000"/><rect x="17" y="13" width="7" height="2" fill="#00e000"/><rect x="25" y="13" width="7" height="2" fill="#00e000"/><rect x="33" y="13" width="7" height="2" fill="#00e000"/><rect x="41" y="13" width="7" height="2" fill="#00e000"/><rect x="49" y="13" width="7" height="2" fill="#00e000"/><rect x="1" y="16" width="7" height="2" fill="#00e000"/><rect x="9" y="16" width="7" height="2" fill="#00e000"/><rect x="17" y="16" width="7" height="2" fill="#00e000"/><rect x="25" y="16" width="7" height="2" fill="#00e000"/><rect x="33" y="16" width="7" height="2" fill="#00e000"/><rect x="41" y="16" width="7" height="2" fill="#00e000"/><rect x="49" y="16" width="7" height="2" fill="#00e000"/></svg>
</div>
<div class="a" style="left:242px;top:490px;width:430px;height:21px;background:#f3f3f3;overflow:hidden">
<svg class="a" style="left:6px;top:2px" width="16" height="16"><path d="M0 13.5C0 10 1.5 8.5 4 8.5C6.5 8.5 7.5 10 7.5 13.5Z" fill="#e83850"/><ellipse cx="4.8" cy="5.6" rx="4" ry="5.4" fill="#a86a48"/><ellipse cx="4.6" cy="6.8" rx="2.4" ry="3.4" fill="#f0c488"/><path d="M2.5 16C2.5 12.5 5.5 11 9 11C12.5 11 15.5 12.5 15.5 16Z" fill="#1e9040"/><ellipse cx="9.2" cy="6.4" rx="4" ry="5.2" fill="#eccc88"/><ellipse cx="9.2" cy="7.4" rx="3.1" ry="4.3" fill="#f8d8a0"/><rect x="8" y="10.5" width="2.4" height="2" fill="#f8d8a0"/></svg>
<div class="t" style="left:27px;top:5px;font-size:11.5px;color:#000">7 а</div>
<div class="t" style="left:166px;top:5px;font-size:11.5px;color:#000">7 а</div>
<div class="t" style="left:211px;width:44px;text-align:right;top:5px;font-size:11.5px;color:#000">28</div>
<svg class="a" style="left:261px;top:0" width="57" height="19"><rect x="0" y="0" width="57" height="19" fill="#000"/><rect x="1" y="1" width="55" height="2" fill="#fff"/><rect x="1" y="4" width="7" height="2" fill="#00e000"/><rect x="9" y="4" width="7" height="2" fill="#00e000"/><rect x="17" y="4" width="7" height="2" fill="#00e000"/><rect x="25" y="4" width="7" height="2" fill="#00e000"/><rect x="33" y="4" width="7" height="2" fill="#00e000"/><rect x="41" y="4" width="7" height="2" fill="#00e000"/><rect x="49" y="4" width="7" height="2" fill="#00e000"/><rect x="1" y="7" width="7" height="2" fill="#00e000"/><rect x="9" y="7" width="7" height="2" fill="#00e000"/><rect x="17" y="7" width="7" height="2" fill="#00e000"/><rect x="25" y="7" width="7" height="2" fill="#00e000"/><rect x="33" y="7" width="7" height="2" fill="#00e000"/><rect x="41" y="7" width="7" height="2" fill="#00e000"/><rect x="49" y="7" width="7" height="2" fill="#00e000"/><rect x="1" y="10" width="7" height="2" fill="#00e000"/><rect x="9" y="10" width="7" height="2" fill="#00e000"/><rect x="17" y="10" width="7" height="2" fill="#00e000"/><rect x="25" y="10" width="7" height="2" fill="#00e000"/><rect x="33" y="10" width="7" height="2" fill="#00e000"/><rect x="41" y="10" width="7" height="2" fill="#00e000"/><rect x="49" y="10" width="7" height="2" fill="#00e000"/><rect x="1" y="13" width="7" height="2" fill="#00e000"/><rect x="9" y="13" width="7" height="2" fill="#00e000"/><rect x="17" y="13" width="7" height="2" fill="#00e000"/><rect x="25" y="13" width="7" height="2" fill="#00e000"/><rect x="33" y="13" width="7" height="2" fill="#00e000"/><rect x="41" y="13" width="7" height="2" fill="#00e000"/><rect x="49" y="13" width="7" height="2" fill="#00e000"/><rect x="1" y="16" width="7" height="2" fill="#00e000"/><rect x="9" y="16" width="7" height="2" fill="#00e000"/><rect x="17" y="16" width="7" height="2" fill="#00e000"/><rect x="25" y="16" width="7" height="2" fill="#00e000"/><rect x="33" y="16" width="7" height="2" fill="#00e000"/><rect x="41" y="16" width="7" height="2" fill="#00e000"/><rect x="49" y="16" width="7" height="2" fill="#00e000"/></svg>
</div>
<div class="a" style="left:242px;top:511px;width:430px;height:21px;background:#ffffff;overflow:hidden">
<svg class="a" style="left:6px;top:2px" width="16" height="16"><path d="M0 13.5C0 10 1.5 8.5 4 8.5C6.5 8.5 7.5 10 7.5 13.5Z" fill="#e83850"/><ellipse cx="4.8" cy="5.6" rx="4" ry="5.4" fill="#a86a48"/><ellipse cx="4.6" cy="6.8" rx="2.4" ry="3.4" fill="#f0c488"/><path d="M2.5 16C2.5 12.5 5.5 11 9 11C12.5 11 15.5 12.5 15.5 16Z" fill="#1e9040"/><ellipse cx="9.2" cy="6.4" rx="4" ry="5.2" fill="#eccc88"/><ellipse cx="9.2" cy="7.4" rx="3.1" ry="4.3" fill="#f8d8a0"/><rect x="8" y="10.5" width="2.4" height="2" fill="#f8d8a0"/></svg>
<div class="t" style="left:27px;top:5px;font-size:11.5px;color:#000">7 б</div>
<div class="t" style="left:166px;top:5px;font-size:11.5px;color:#000">7 б</div>
<div class="t" style="left:211px;width:44px;text-align:right;top:5px;font-size:11.5px;color:#000">26</div>
<svg class="a" style="left:261px;top:0" width="57" height="19"><rect x="0" y="0" width="57" height="19" fill="#000"/><rect x="1" y="1" width="55" height="2" fill="#fff"/><rect x="1" y="4" width="7" height="2" fill="#00e000"/><rect x="9" y="4" width="7" height="2" fill="#00e000"/><rect x="17" y="4" width="7" height="2" fill="#00e000"/><rect x="25" y="4" width="7" height="2" fill="#00e000"/><rect x="33" y="4" width="7" height="2" fill="#00e000"/><rect x="41" y="4" width="7" height="2" fill="#00e000"/><rect x="49" y="4" width="7" height="2" fill="#00e000"/><rect x="1" y="7" width="7" height="2" fill="#00e000"/><rect x="9" y="7" width="7" height="2" fill="#00e000"/><rect x="17" y="7" width="7" height="2" fill="#00e000"/><rect x="25" y="7" width="7" height="2" fill="#00e000"/><rect x="33" y="7" width="7" height="2" fill="#00e000"/><rect x="41" y="7" width="7" height="2" fill="#00e000"/><rect x="49" y="7" width="7" height="2" fill="#00e000"/><rect x="1" y="10" width="7" height="2" fill="#00e000"/><rect x="9" y="10" width="7" height="2" fill="#00e000"/><rect x="17" y="10" width="7" height="2" fill="#00e000"/><rect x="25" y="10" width="7" height="2" fill="#00e000"/><rect x="33" y="10" width="7" height="2" fill="#00e000"/><rect x="41" y="10" width="7" height="2" fill="#00e000"/><rect x="49" y="10" width="7" height="2" fill="#00e000"/><rect x="1" y="13" width="7" height="2" fill="#00e000"/><rect x="9" y="13" width="7" height="2" fill="#00e000"/><rect x="17" y="13" width="7" height="2" fill="#00e000"/><rect x="25" y="13" width="7" height="2" fill="#00e000"/><rect x="33" y="13" width="7" height="2" fill="#00e000"/><rect x="41" y="13" width="7" height="2" fill="#00e000"/><rect x="49" y="13" width="7" height="2" fill="#00e000"/><rect x="1" y="16" width="7" height="2" fill="#00e000"/><rect x="9" y="16" width="7" height="2" fill="#00e000"/><rect x="17" y="16" width="7" height="2" fill="#00e000"/><rect x="25" y="16" width="7" height="2" fill="#00e000"/><rect x="33" y="16" width="7" height="2" fill="#00e000"/><rect x="41" y="16" width="7" height="2" fill="#00e000"/><rect x="49" y="16" width="7" height="2" fill="#00e000"/></svg>
</div>
<div class="a" style="left:242px;top:532px;width:430px;height:21px;background:#f3f3f3;overflow:hidden">
<svg class="a" style="left:6px;top:2px" width="16" height="16"><path d="M0 13.5C0 10 1.5 8.5 4 8.5C6.5 8.5 7.5 10 7.5 13.5Z" fill="#e83850"/><ellipse cx="4.8" cy="5.6" rx="4" ry="5.4" fill="#a86a48"/><ellipse cx="4.6" cy="6.8" rx="2.4" ry="3.4" fill="#f0c488"/><path d="M2.5 16C2.5 12.5 5.5 11 9 11C12.5 11 15.5 12.5 15.5 16Z" fill="#1e9040"/><ellipse cx="9.2" cy="6.4" rx="4" ry="5.2" fill="#eccc88"/><ellipse cx="9.2" cy="7.4" rx="3.1" ry="4.3" fill="#f8d8a0"/><rect x="8" y="10.5" width="2.4" height="2" fill="#f8d8a0"/></svg>
<div class="t" style="left:27px;top:5px;font-size:11.5px;color:#000">8 а</div>
<div class="t" style="left:166px;top:5px;font-size:11.5px;color:#000">8 а</div>
<div class="t" style="left:211px;width:44px;text-align:right;top:5px;font-size:11.5px;color:#000">28</div>
<svg class="a" style="left:261px;top:0" width="57" height="19"><rect x="0" y="0" width="57" height="19" fill="#000"/><rect x="1" y="1" width="55" height="2" fill="#fff"/><rect x="1" y="4" width="7" height="2" fill="#00e000"/><rect x="9" y="4" width="7" height="2" fill="#00e000"/><rect x="17" y="4" width="7" height="2" fill="#00e000"/><rect x="25" y="4" width="7" height="2" fill="#00e000"/><rect x="33" y="4" width="7" height="2" fill="#00e000"/><rect x="41" y="4" width="7" height="2" fill="#00e000"/><rect x="49" y="4" width="7" height="2" fill="#00e000"/><rect x="1" y="7" width="7" height="2" fill="#00e000"/><rect x="9" y="7" width="7" height="2" fill="#00e000"/><rect x="17" y="7" width="7" height="2" fill="#00e000"/><rect x="25" y="7" width="7" height="2" fill="#00e000"/><rect x="33" y="7" width="7" height="2" fill="#00e000"/><rect x="41" y="7" width="7" height="2" fill="#00e000"/><rect x="49" y="7" width="7" height="2" fill="#00e000"/><rect x="1" y="10" width="7" height="2" fill="#00e000"/><rect x="9" y="10" width="7" height="2" fill="#00e000"/><rect x="17" y="10" width="7" height="2" fill="#00e000"/><rect x="25" y="10" width="7" height="2" fill="#00e000"/><rect x="33" y="10" width="7" height="2" fill="#00e000"/><rect x="41" y="10" width="7" height="2" fill="#00e000"/><rect x="49" y="10" width="7" height="2" fill="#00e000"/><rect x="1" y="13" width="7" height="2" fill="#00e000"/><rect x="9" y="13" width="7" height="2" fill="#00e000"/><rect x="17" y="13" width="7" height="2" fill="#00e000"/><rect x="25" y="13" width="7" height="2" fill="#00e000"/><rect x="33" y="13" width="7" height="2" fill="#00e000"/><rect x="41" y="13" width="7" height="2" fill="#00e000"/><rect x="49" y="13" width="7" height="2" fill="#00e000"/><rect x="1" y="16" width="7" height="2" fill="#00e000"/><rect x="9" y="16" width="7" height="2" fill="#00e000"/><rect x="17" y="16" width="7" height="2" fill="#00e000"/><rect x="25" y="16" width="7" height="2" fill="#00e000"/><rect x="33" y="16" width="7" height="2" fill="#00e000"/><rect x="41" y="16" width="7" height="2" fill="#00e000"/><rect x="49" y="16" width="7" height="2" fill="#00e000"/></svg>
</div>
<div class="a" style="left:242px;top:553px;width:430px;height:21px;background:#ffffff;overflow:hidden">
<svg class="a" style="left:6px;top:2px" width="16" height="16"><path d="M0 13.5C0 10 1.5 8.5 4 8.5C6.5 8.5 7.5 10 7.5 13.5Z" fill="#e83850"/><ellipse cx="4.8" cy="5.6" rx="4" ry="5.4" fill="#a86a48"/><ellipse cx="4.6" cy="6.8" rx="2.4" ry="3.4" fill="#f0c488"/><path d="M2.5 16C2.5 12.5 5.5 11 9 11C12.5 11 15.5 12.5 15.5 16Z" fill="#1e9040"/><ellipse cx="9.2" cy="6.4" rx="4" ry="5.2" fill="#eccc88"/><ellipse cx="9.2" cy="7.4" rx="3.1" ry="4.3" fill="#f8d8a0"/><rect x="8" y="10.5" width="2.4" height="2" fill="#f8d8a0"/></svg>
<div class="t" style="left:27px;top:5px;font-size:11.5px;color:#000">8 б</div>
<div class="t" style="left:166px;top:5px;font-size:11.5px;color:#000">8 б</div>
<div class="t" style="left:211px;width:44px;text-align:right;top:5px;font-size:11.5px;color:#000">31</div>
<svg class="a" style="left:261px;top:0" width="57" height="19"><rect x="0" y="0" width="57" height="19" fill="#000"/><rect x="1" y="1" width="55" height="2" fill="#fff"/><rect x="1" y="4" width="7" height="2" fill="#00e000"/><rect x="9" y="4" width="7" height="2" fill="#00e000"/><rect x="17" y="4" width="7" height="2" fill="#00e000"/><rect x="25" y="4" width="7" height="2" fill="#00e000"/><rect x="33" y="4" width="7" height="2" fill="#00e000"/><rect x="41" y="4" width="7" height="2" fill="#00e000"/><rect x="49" y="4" width="7" height="2" fill="#00e000"/><rect x="1" y="7" width="7" height="2" fill="#00e000"/><rect x="9" y="7" width="7" height="2" fill="#00e000"/><rect x="17" y="7" width="7" height="2" fill="#00e000"/><rect x="25" y="7" width="7" height="2" fill="#00e000"/><rect x="33" y="7" width="7" height="2" fill="#00e000"/><rect x="41" y="7" width="7" height="2" fill="#00e000"/><rect x="49" y="7" width="7" height="2" fill="#00e000"/><rect x="1" y="10" width="7" height="2" fill="#00e000"/><rect x="9" y="10" width="7" height="2" fill="#00e000"/><rect x="17" y="10" width="7" height="2" fill="#00e000"/><rect x="25" y="10" width="7" height="2" fill="#00e000"/><rect x="33" y="10" width="7" height="2" fill="#00e000"/><rect x="41" y="10" width="7" height="2" fill="#00e000"/><rect x="49" y="10" width="7" height="2" fill="#00e000"/><rect x="1" y="13" width="7" height="2" fill="#00e000"/><rect x="9" y="13" width="7" height="2" fill="#00e000"/><rect x="17" y="13" width="7" height="2" fill="#00e000"/><rect x="25" y="13" width="7" height="2" fill="#00e000"/><rect x="33" y="13" width="7" height="2" fill="#00e000"/><rect x="41" y="13" width="7" height="2" fill="#00e000"/><rect x="49" y="13" width="7" height="2" fill="#00e000"/><rect x="1" y="16" width="7" height="2" fill="#00e000"/><rect x="9" y="16" width="7" height="2" fill="#00e000"/><rect x="17" y="16" width="7" height="2" fill="#00e000"/><rect x="25" y="16" width="7" height="2" fill="#00e000"/><rect x="33" y="16" width="7" height="2" fill="#00e000"/><rect x="41" y="16" width="7" height="2" fill="#00e000"/><rect x="49" y="16" width="7" height="2" fill="#00e000"/></svg>
</div>
<div class="a" style="left:242px;top:574px;width:430px;height:21px;background:#f3f3f3;overflow:hidden">
<svg class="a" style="left:6px;top:2px" width="16" height="16"><path d="M0 13.5C0 10 1.5 8.5 4 8.5C6.5 8.5 7.5 10 7.5 13.5Z" fill="#e83850"/><ellipse cx="4.8" cy="5.6" rx="4" ry="5.4" fill="#a86a48"/><ellipse cx="4.6" cy="6.8" rx="2.4" ry="3.4" fill="#f0c488"/><path d="M2.5 16C2.5 12.5 5.5 11 9 11C12.5 11 15.5 12.5 15.5 16Z" fill="#1e9040"/><ellipse cx="9.2" cy="6.4" rx="4" ry="5.2" fill="#eccc88"/><ellipse cx="9.2" cy="7.4" rx="3.1" ry="4.3" fill="#f8d8a0"/><rect x="8" y="10.5" width="2.4" height="2" fill="#f8d8a0"/></svg>
<div class="t" style="left:27px;top:5px;font-size:11.5px;color:#000">9 а</div>
<div class="t" style="left:166px;top:5px;font-size:11.5px;color:#000">9 а</div>
<div class="t" style="left:211px;width:44px;text-align:right;top:5px;font-size:11.5px;color:#000">33</div>
<svg class="a" style="left:261px;top:0" width="57" height="19"><rect x="0" y="0" width="57" height="19" fill="#000"/><rect x="1" y="1" width="55" height="2" fill="#fff"/><rect x="1" y="4" width="7" height="2" fill="#00e000"/><rect x="9" y="4" width="7" height="2" fill="#00e000"/><rect x="17" y="4" width="7" height="2" fill="#00e000"/><rect x="25" y="4" width="7" height="2" fill="#00e000"/><rect x="33" y="4" width="7" height="2" fill="#00e000"/><rect x="41" y="4" width="7" height="2" fill="#00e000"/><rect x="49" y="4" width="7" height="2" fill="#00e000"/><rect x="1" y="7" width="7" height="2" fill="#00e000"/><rect x="9" y="7" width="7" height="2" fill="#00e000"/><rect x="17" y="7" width="7" height="2" fill="#00e000"/><rect x="25" y="7" width="7" height="2" fill="#00e000"/><rect x="33" y="7" width="7" height="2" fill="#00e000"/><rect x="41" y="7" width="7" height="2" fill="#00e000"/><rect x="49" y="7" width="7" height="2" fill="#00e000"/><rect x="1" y="10" width="7" height="2" fill="#00e000"/><rect x="9" y="10" width="7" height="2" fill="#00e000"/><rect x="17" y="10" width="7" height="2" fill="#00e000"/><rect x="25" y="10" width="7" height="2" fill="#00e000"/><rect x="33" y="10" width="7" height="2" fill="#00e000"/><rect x="41" y="10" width="7" height="2" fill="#00e000"/><rect x="49" y="10" width="7" height="2" fill="#00e000"/><rect x="1" y="13" width="7" height="2" fill="#00e000"/><rect x="9" y="13" width="7" height="2" fill="#00e000"/><rect x="17" y="13" width="7" height="2" fill="#00e000"/><rect x="25" y="13" width="7" height="2" fill="#00e000"/><rect x="33" y="13" width="7" height="2" fill="#00e000"/><rect x="41" y="13" width="7" height="2" fill="#00e000"/><rect x="49" y="13" width="7" height="2" fill="#00e000"/><rect x="1" y="16" width="7" height="2" fill="#00e000"/><rect x="9" y="16" width="7" height="2" fill="#00e000"/><rect x="17" y="16" width="7" height="2" fill="#00e000"/><rect x="25" y="16" width="7" height="2" fill="#00e000"/><rect x="33" y="16" width="7" height="2" fill="#00e000"/><rect x="41" y="16" width="7" height="2" fill="#00e000"/><rect x="49" y="16" width="7" height="2" fill="#00e000"/></svg>
</div>
<div class="a" style="left:242px;top:595px;width:430px;height:21px;background:#ffffff;overflow:hidden">
<svg class="a" style="left:6px;top:2px" width="16" height="16"><path d="M0 13.5C0 10 1.5 8.5 4 8.5C6.5 8.5 7.5 10 7.5 13.5Z" fill="#e83850"/><ellipse cx="4.8" cy="5.6" rx="4" ry="5.4" fill="#a86a48"/><ellipse cx="4.6" cy="6.8" rx="2.4" ry="3.4" fill="#f0c488"/><path d="M2.5 16C2.5 12.5 5.5 11 9 11C12.5 11 15.5 12.5 15.5 16Z" fill="#1e9040"/><ellipse cx="9.2" cy="6.4" rx="4" ry="5.2" fill="#eccc88"/><ellipse cx="9.2" cy="7.4" rx="3.1" ry="4.3" fill="#f8d8a0"/><rect x="8" y="10.5" width="2.4" height="2" fill="#f8d8a0"/></svg>
<div class="t" style="left:27px;top:5px;font-size:11.5px;color:#000">9 б</div>
<div class="t" style="left:166px;top:5px;font-size:11.5px;color:#000">9 б</div>
<div class="t" style="left:211px;width:44px;text-align:right;top:5px;font-size:11.5px;color:#000">0</div>
<svg class="a" style="left:261px;top:0" width="57" height="19"><rect x="0" y="0" width="57" height="19" fill="#000"/><rect x="1" y="1" width="55" height="2" fill="#fff"/><rect x="1" y="4" width="7" height="2" fill="#00e000"/><rect x="9" y="4" width="7" height="2" fill="#00e000"/><rect x="17" y="4" width="7" height="2" fill="#00e000"/><rect x="25" y="4" width="7" height="2" fill="#00e000"/><rect x="33" y="4" width="7" height="2" fill="#00e000"/><rect x="41" y="4" width="7" height="2" fill="#00e000"/><rect x="49" y="4" width="7" height="2" fill="#00e000"/><rect x="1" y="7" width="7" height="2" fill="#00e000"/><rect x="9" y="7" width="7" height="2" fill="#00e000"/><rect x="17" y="7" width="7" height="2" fill="#00e000"/><rect x="25" y="7" width="7" height="2" fill="#00e000"/><rect x="33" y="7" width="7" height="2" fill="#00e000"/><rect x="41" y="7" width="7" height="2" fill="#00e000"/><rect x="49" y="7" width="7" height="2" fill="#00e000"/><rect x="1" y="10" width="7" height="2" fill="#00e000"/><rect x="9" y="10" width="7" height="2" fill="#00e000"/><rect x="17" y="10" width="7" height="2" fill="#00e000"/><rect x="25" y="10" width="7" height="2" fill="#00e000"/><rect x="33" y="10" width="7" height="2" fill="#00e000"/><rect x="41" y="10" width="7" height="2" fill="#00e000"/><rect x="49" y="10" width="7" height="2" fill="#00e000"/><rect x="1" y="13" width="7" height="2" fill="#00e000"/><rect x="9" y="13" width="7" height="2" fill="#00e000"/><rect x="17" y="13" width="7" height="2" fill="#00e000"/><rect x="25" y="13" width="7" height="2" fill="#00e000"/><rect x="33" y="13" width="7" height="2" fill="#00e000"/><rect x="41" y="13" width="7" height="2" fill="#00e000"/><rect x="49" y="13" width="7" height="2" fill="#00e000"/><rect x="1" y="16" width="7" height="2" fill="#00e000"/><rect x="9" y="16" width="7" height="2" fill="#00e000"/><rect x="17" y="16" width="7" height="2" fill="#00e000"/><rect x="25" y="16" width="7" height="2" fill="#00e000"/><rect x="33" y="16" width="7" height="2" fill="#00e000"/><rect x="41" y="16" width="7" height="2" fill="#00e000"/><rect x="49" y="16" width="7" height="2" fill="#00e000"/></svg>
</div>
<div class="a" style="left:242px;top:616px;width:430px;height:20px;background:#f3f3f3;overflow:hidden">
<svg class="a" style="left:6px;top:2px" width="16" height="16"><path d="M0 13.5C0 10 1.5 8.5 4 8.5C6.5 8.5 7.5 10 7.5 13.5Z" fill="#e83850"/><ellipse cx="4.8" cy="5.6" rx="4" ry="5.4" fill="#a86a48"/><ellipse cx="4.6" cy="6.8" rx="2.4" ry="3.4" fill="#f0c488"/><path d="M2.5 16C2.5 12.5 5.5 11 9 11C12.5 11 15.5 12.5 15.5 16Z" fill="#1e9040"/><ellipse cx="9.2" cy="6.4" rx="4" ry="5.2" fill="#eccc88"/><ellipse cx="9.2" cy="7.4" rx="3.1" ry="4.3" fill="#f8d8a0"/><rect x="8" y="10.5" width="2.4" height="2" fill="#f8d8a0"/></svg>
<div class="t" style="left:27px;top:5px;font-size:11.5px;color:#000">10. а</div>
<div class="t" style="left:166px;top:5px;font-size:11.5px;color:#000">10. а</div>
<div class="t" style="left:211px;width:44px;text-align:right;top:5px;font-size:11.5px;color:#000">31</div>
<svg class="a" style="left:261px;top:0" width="57" height="19"><rect x="0" y="0" width="57" height="19" fill="#000"/><rect x="1" y="1" width="55" height="2" fill="#fff"/><rect x="1" y="4" width="7" height="2" fill="#00e000"/><rect x="9" y="4" width="7" height="2" fill="#00e000"/><rect x="17" y="4" width="7" height="2" fill="#00e000"/><rect x="25" y="4" width="7" height="2" fill="#00e000"/><rect x="33" y="4" width="7" height="2" fill="#00e000"/><rect x="41" y="4" width="7" height="2" fill="#00e000"/><rect x="49" y="4" width="7" height="2" fill="#00e000"/><rect x="1" y="7" width="7" height="2" fill="#00e000"/><rect x="9" y="7" width="7" height="2" fill="#00e000"/><rect x="17" y="7" width="7" height="2" fill="#00e000"/><rect x="25" y="7" width="7" height="2" fill="#00e000"/><rect x="33" y="7" width="7" height="2" fill="#00e000"/><rect x="41" y="7" width="7" height="2" fill="#00e000"/><rect x="49" y="7" width="7" height="2" fill="#00e000"/><rect x="1" y="10" width="7" height="2" fill="#00e000"/><rect x="9" y="10" width="7" height="2" fill="#00e000"/><rect x="17" y="10" width="7" height="2" fill="#00e000"/><rect x="25" y="10" width="7" height="2" fill="#00e000"/><rect x="33" y="10" width="7" height="2" fill="#00e000"/><rect x="41" y="10" width="7" height="2" fill="#00e000"/><rect x="49" y="10" width="7" height="2" fill="#00e000"/><rect x="1" y="13" width="7" height="2" fill="#00e000"/><rect x="9" y="13" width="7" height="2" fill="#00e000"/><rect x="17" y="13" width="7" height="2" fill="#00e000"/><rect x="25" y="13" width="7" height="2" fill="#00e000"/><rect x="33" y="13" width="7" height="2" fill="#00e000"/><rect x="41" y="13" width="7" height="2" fill="#00e000"/><rect x="49" y="13" width="7" height="2" fill="#00e000"/><rect x="1" y="16" width="7" height="2" fill="#00e000"/><rect x="9" y="16" width="7" height="2" fill="#00e000"/><rect x="17" y="16" width="7" height="2" fill="#00e000"/><rect x="25" y="16" width="7" height="2" fill="#00e000"/><rect x="33" y="16" width="7" height="2" fill="#00e000"/><rect x="41" y="16" width="7" height="2" fill="#00e000"/><rect x="49" y="16" width="7" height="2" fill="#00e000"/></svg>
</div>
<div class="a" style="left:672px;top:234px;width:17px;height:402px;background:#f0f0f0"></div>
<div class="a" style="left:673px;top:319px;width:15px;height:230px;background:#cdcdcd"></div>
<svg class="a" style="left:675px;top:240px" width="10" height="8"><path d="M1 6L5 2L9 6" stroke="#606060" stroke-width="2" fill="none"/></svg>
<svg class="a" style="left:675px;top:622px" width="10" height="8"><path d="M1 2L5 6L9 2" stroke="#606060" stroke-width="2" fill="none"/></svg>
<div class="a" style="left:242px;top:636px;width:430px;height:17px;background:#f0f0f0"></div>
<div class="a" style="left:260px;top:637px;width:147px;height:15px;background:#cdcdcd"></div>
<svg class="a" style="left:247px;top:639px" width="8" height="10"><path d="M6 1L2 5L6 9" stroke="#606060" stroke-width="2" fill="none"/></svg>
<svg class="a" style="left:659px;top:639px" width="8" height="10"><path d="M2 1L6 5L2 9" stroke="#606060" stroke-width="2" fill="none"/></svg>
<div class="a" style="left:672px;top:636px;width:17px;height:17px;background:#f0f0f0"></div>
<svg class="a" style="left:178px;top:243px" width="40" height="46"><rect x="1" y="1" width="38" height="44" rx="1.5" fill="#7aa8e8" stroke="#5a84c4" stroke-width="1.2"/><rect x="1" y="1" width="6" height="44" fill="#5a84c4"/><rect x="13" y="11" width="18" height="12" fill="#fff"/><path d="M16 15.5H28M16 19H28" stroke="#a8c0d8" stroke-width="1.2"/></svg>
<svg class="a" style="left:172px;top:307px" width="52" height="52"><ellipse cx="17.5" cy="11.5" rx="10" ry="10" fill="#a86a48" stroke="#7a4a30" stroke-width="0.8"/><path d="M2 35H26V39H2Z" fill="#d83030"/><ellipse cx="31" cy="18" rx="11" ry="12.5" fill="#f4cc88" stroke="#c8985a" stroke-width="0.8"/><path d="M12 50C12 41 20 37 31 37C42 37 50 41 50 50Z" fill="#b8e0bc" stroke="#2a9a3a" stroke-width="1.4"/><path d="M2 18.5H27V8.5L49.5 26L27 43.5V33.5H2Z" fill="#80f080" stroke="#108010" stroke-width="2.2"/><path d="M6 29H30" stroke="#fff" stroke-width="2.4"/></svg>
<svg class="a" style="left:180px;top:374px" width="36" height="50"><rect x="3" y="2" width="31" height="44" fill="#ffc8a0" stroke="#c08a6a" stroke-width="1"/><rect x="16" y="5" width="15" height="40" fill="#4e3e44"/><rect x="23" y="5" width="8" height="40" fill="#76606a"/><path d="M1 3L17 0V49L1 46Z" fill="#ffc8a0" stroke="#c08a6a" stroke-width="1"/><rect x="12" y="23" width="1.5" height="1.5" fill="#7a4020"/></svg>
<svg class="a" style="left:173px;top:445px" width="50" height="44"><path d="M10 20V35C10 42 40 42 40 35V20Z" fill="#3c3e44"/><path d="M2 16L25 1L48 16L25 31Z" fill="#5c5e64" stroke="#1e2430" stroke-width="2"/><path d="M25 16L8 19V34" stroke="#f0a020" stroke-width="1.6" fill="none"/><path d="M5 33L8 41L11 33Z" fill="#f0a020"/></svg>
<div class="a" style="left:705px;top:234px;width:132px;height:27px;background:#e1e1e1;border:2px solid #0078d7"></div>
<svg class="a" style="left:714px;top:239px" width="16" height="16"><circle cx="8" cy="8" r="7.5" fill="#3cb648"/><path d="M8 3.5V12.5M3.5 8H12.5" stroke="#fff" stroke-width="2.4"/></svg>
<div class="t" style="left:737px;top:242px;font-size:11.2px;color:#000">Нов</div>
<div class="a" style="left:705px;top:270px;width:132px;height:27px;background:#e1e1e1;border:1px solid #adadad"></div>
<svg class="a" style="left:714px;top:275px" width="16" height="16"><path d="M0 13.5C0 10 1.5 8.5 4 8.5C6.5 8.5 7.5 10 7.5 13.5Z" fill="#e83850"/><ellipse cx="4.8" cy="5.6" rx="4" ry="5.4" fill="#a86a48"/><ellipse cx="4.6" cy="6.8" rx="2.4" ry="3.4" fill="#f0c488"/><path d="M2.5 16C2.5 12.5 5.5 11 9 11C12.5 11 15.5 12.5 15.5 16Z" fill="#1e9040"/><ellipse cx="9.2" cy="6.4" rx="4" ry="5.2" fill="#eccc88"/><ellipse cx="9.2" cy="7.4" rx="3.1" ry="4.3" fill="#f8d8a0"/><rect x="8" y="10.5" width="2.4" height="2" fill="#f8d8a0"/></svg>
<div class="t" style="left:737px;top:278px;font-size:11.2px;color:#000">Редактирай</div>
<div class="a" style="left:705px;top:305px;width:132px;height:27px;background:#e1e1e1;border:1px solid #adadad"></div>
<svg class="a" style="left:714px;top:310px" width="16" height="16"><circle cx="8" cy="8" r="7.5" fill="#e8383c"/><rect x="3" y="6.5" width="10" height="3" fill="#fff"/></svg>
<div class="t" style="left:737px;top:313px;font-size:11.2px;color:#000">Премахни</div>
<div class="a" style="left:705px;top:372px;width:132px;height:27px;background:#e1e1e1;border:1px solid #adadad"></div>
<svg class="a" style="left:714px;top:377px" width="16" height="16"><rect x="4" y="4" width="11" height="11" fill="#1e90f0"/><rect x="1" y="1" width="11" height="11" fill="#f0106a"/></svg>
<div class="t" style="left:737px;top:380px;font-size:11.2px;color:#000">Часове</div>
<div class="a" style="left:705px;top:408px;width:132px;height:27px;background:#e1e1e1;border:1px solid #adadad"></div>
<svg class="a" style="left:713px;top:412px" width="17" height="17"><circle cx="8.3" cy="8.6" r="6.7" fill="#fff" stroke="#4a78c0" stroke-width="1.3"/><path d="M10.6 3.7L8 8.5L11 11.2" stroke="#505860" stroke-width="1" fill="none"/></svg>
<div class="t" style="left:737px;top:416px;font-size:11.2px;color:#000">Условия</div>
<div class="a" style="left:705px;top:444px;width:132px;height:27px;background:#e1e1e1;border:1px solid #adadad"></div>
<svg class="a" style="left:714px;top:448px" width="17" height="17"><path d="M4.5 1V17M11.5 1V17M0.2 5.8H16.2M0.2 12.5H16.2" stroke="#8a70a8" stroke-width="2.8"/></svg>
<div class="t" style="left:737px;top:452px;font-size:11.2px;color:#000">Ограничения</div>
<div class="a" style="left:705px;top:510px;width:132px;height:27px;background:#e1e1e1;border:1px solid #adadad"></div>
<svg class="a" style="left:713px;top:514px" width="18" height="18"><path d="M9 17V10.5L4 5.5M9 10.5L14 5.5" stroke="#3e72c0" stroke-width="4.2" fill="none"/><path d="M1.5 1.5H8.5L1.5 8.5Z M16.5 1.5H9.5L16.5 8.5Z" fill="#3e72c0"/><path d="M9 16V10.5L4 5.5" stroke="#9cc4f4" stroke-width="2" fill="none"/><path d="M9 10.5L14 5.5" stroke="#c8ecff" stroke-width="2" fill="none"/><path d="M3 3H6L3 6Z" fill="#9cc4f4"/><path d="M15 3H12L15 6Z" fill="#c8ecff"/></svg>
<div class="t" style="left:737px;top:518px;font-size:11.2px;color:#000">Делене</div>
<svg class="a" style="left:701px;top:607px" width="10" height="12"><path d="M5 11V1.5M1.5 5L5 1.5L8.5 5" stroke="#000" stroke-width="1.4" fill="none"/></svg>
<svg class="a" style="left:701px;top:633px" width="10" height="12"><path d="M5 1V10.5M1.5 7L5 10.5L8.5 7" stroke="#000" stroke-width="1.4" fill="none"/></svg>
<div class="a" style="left:158px;top:674px;width:689px;height:1px;background:#a0a0a0"></div>
<div class="a" style="left:158px;top:689px;width:83px;height:21px;background:#e1e1e1;border:1px solid #adadad"></div>
<svg class="a" style="left:161px;top:691px" width="16" height="16"><circle cx="8" cy="8" r="7.3" fill="#8cb8f0" stroke="#5a88d0" stroke-width="1"/><text x="8" y="12.5" font-size="11" text-anchor="middle" fill="#fff" font-family="Liberation Sans">?</text></svg>
<div class="t" style="left:177px;width:64px;text-align:center;top:693px;font-size:11.2px;color:#000">Помощ</div>
<div class="a" style="left:247px;top:689px;width:83px;height:21px;background:#e1e1e1;border:1px solid #adadad"></div>
<svg class="a" style="left:251px;top:691px" width="16" height="16"><path d="M1 1H12L15 4V15H1Z" fill="#ece4f4" stroke="#c0b0d8" stroke-width="1"/><rect x="4" y="1.5" width="7" height="4" fill="#b0b8c8"/><path d="M6 13L13 6L14.5 7.5L7.5 14.5L5.5 15Z" fill="#f0d890" stroke="#c8a850" stroke-width="0.6"/></svg>
<div class="t" style="left:266px;width:64px;text-align:center;top:693px;font-size:11.2px;color:#000">Запази</div>
<div class="a" style="left:336px;top:689px;width:83px;height:21px;background:#e1e1e1;border:1px solid #adadad"></div>
<svg class="a" style="left:341px;top:691px" width="14" height="16"><rect x="0.5" y="0.5" width="13" height="15" fill="#f4d08a" stroke="#e0b868" stroke-width="1"/><path d="M11 8H4M6.5 5.5L4 8L6.5 10.5" stroke="#8a6a30" stroke-width="1.4" fill="none"/></svg>
<div class="t" style="left:355px;width:64px;text-align:center;top:693px;font-size:11.2px;color:#000">Въведи</div>
<div class="a" style="left:774px;top:689px;width:73px;height:21px;background:#e1e1e1;border:1px solid #adadad"></div>
<div class="t" style="left:774px;width:73px;text-align:center;top:693px;font-size:11.2px;color:#000">Затвори</div>
<svg class="a" style="left:845px;top:709px" width="10" height="10"><g fill="#b8b8b8"><rect x="7" y="1" width="2" height="2"/><rect x="4" y="4" width="2" height="2"/><rect x="7" y="4" width="2" height="2"/><rect x="1" y="7" width="2" height="2"/><rect x="4" y="7" width="2" height="2"/><rect x="7" y="7" width="2" height="2"/></g></svg>
</body></html>
